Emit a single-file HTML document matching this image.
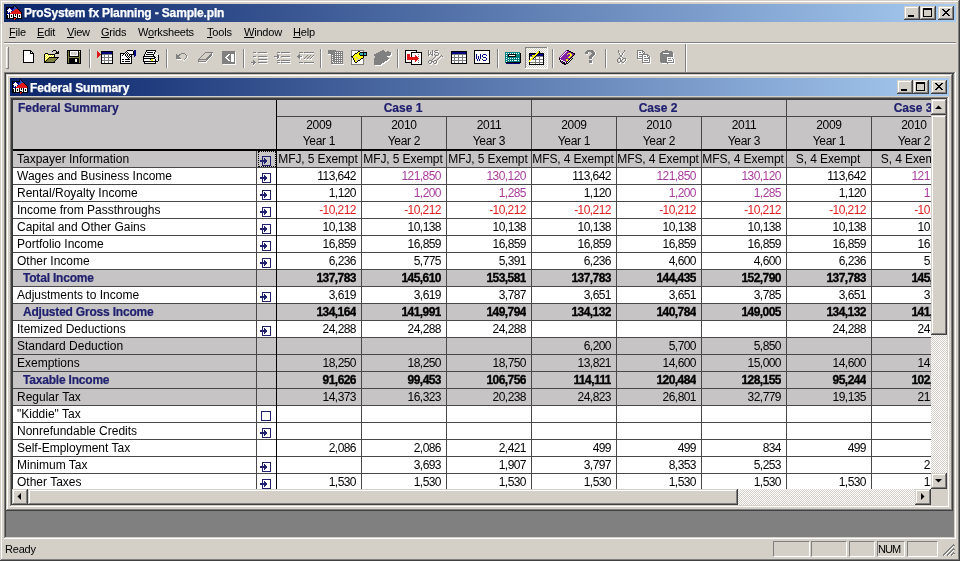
<!DOCTYPE html>
<html><head><meta charset="utf-8"><style>
html,body{margin:0;padding:0;width:960px;height:561px;overflow:hidden;background:#D4D0C8}
body div,body svg{position:absolute}
.t{white-space:nowrap;font-family:"Liberation Sans",sans-serif}
u{text-decoration:underline}
</style></head><body>
<div style="left:0;top:0;width:960px;height:561px;will-change:transform">
<div style="left:0px;top:0px;width:960px;height:561px;background:#D4D0C8;"></div>
<div style="left:1px;top:1px;width:957px;height:1px;background:#FFFFFF;"></div>
<div style="left:1px;top:1px;width:1px;height:558px;background:#FFFFFF;"></div>
<div style="left:958px;top:1px;width:1px;height:559px;background:#808080;"></div>
<div style="left:1px;top:559px;width:958px;height:1px;background:#808080;"></div>
<div style="left:959px;top:0px;width:1px;height:561px;background:#404040;"></div>
<div style="left:0px;top:560px;width:960px;height:1px;background:#404040;"></div>
<div style="left:4px;top:4px;width:952px;height:18px;background:linear-gradient(to right,#0A246A,#A6CAF0);"></div>
<svg style="left:6px;top:5px" width="16" height="15" shape-rendering="crispEdges"><path fill="#000000" d="M8 0h1v1h-1zM7 1h1v1h-1zM9 1h1v1h-1zM0 2h8v1h-8zM10 2h1v1h-1zM0 3h1v1h-1zM11 3h1v1h-1zM0 4h1v1h-1zM12 4h1v1h-1zM0 5h1v1h-1zM13 5h1v1h-1zM0 6h1v1h-1zM14 6h1v1h-1zM0 7h1v1h-1zM15 7h1v1h-1zM0 8h1v1h-1zM15 8h1v1h-1zM0 9h1v1h-1zM3 9h1v1h-1zM7 9h1v1h-1zM9 9h1v1h-1zM11 9h1v1h-1zM15 9h1v1h-1zM0 10h2v1h-2zM3 10h1v1h-1zM5 10h1v1h-1zM7 10h1v1h-1zM9 10h1v1h-1zM11 10h1v1h-1zM13 10h1v1h-1zM15 10h1v1h-1zM0 11h2v1h-2zM3 11h1v1h-1zM5 11h1v1h-1zM7 11h1v1h-1zM11 11h1v1h-1zM13 11h1v1h-1zM15 11h1v1h-1zM0 12h2v1h-2zM3 12h1v1h-1zM7 12h3v1h-3zM11 12h1v1h-1zM15 12h1v1h-1zM0 13h8v1h-8zM10 13h6v1h-6zM9 14h1v1h-1z"/><path fill="#3050C0" d="M8 1h1v1h-1zM8 2h2v1h-2zM8 3h3v1h-3zM7 4h2v1h-2zM7 5h1v1h-1z"/><path fill="#000080" d="M1 3h2v1h-2zM4 3h4v1h-4zM1 4h1v1h-1zM5 4h2v1h-2zM6 5h1v1h-1zM1 6h1v1h-1zM5 6h1v1h-1zM1 7h1v1h-1zM3 7h1v1h-1zM1 8h3v1h-3z"/><path fill="#FFFFFF" d="M3 3h1v1h-1zM2 4h3v1h-3zM1 5h5v1h-5zM2 6h3v1h-3zM2 7h1v1h-1zM4 7h1v1h-1zM1 9h2v1h-2zM4 9h3v1h-3zM8 9h1v1h-1zM10 9h1v1h-1zM12 9h3v1h-3zM2 10h1v1h-1zM4 10h1v1h-1zM6 10h1v1h-1zM8 10h1v1h-1zM10 10h1v1h-1zM12 10h1v1h-1zM14 10h1v1h-1zM2 11h1v1h-1zM4 11h1v1h-1zM6 11h1v1h-1zM8 11h3v1h-3zM12 11h1v1h-1zM14 11h1v1h-1zM2 12h1v1h-1zM4 12h3v1h-3zM10 12h1v1h-1zM12 12h3v1h-3z"/><path fill="#E01818" d="M9 4h3v1h-3zM8 5h5v1h-5zM6 6h8v1h-8zM5 7h10v1h-10zM4 8h11v1h-11zM8 13h2v1h-2zM8 14h1v1h-1z"/></svg>
<div class="t" style="left:24px;top:4px;font-size:12px;font-weight:bold;color:#fff;line-height:18px;letter-spacing:-0.15px;-webkit-text-stroke:0.25px #fff">ProSystem fx Planning - Sample.pln</div>
<div style="left:938px;top:6px;width:16px;height:14px;background:#D4D0C8;"></div>
<div style="left:938px;top:6px;width:15px;height:1px;background:#D4D0C8;"></div>
<div style="left:938px;top:6px;width:1px;height:13px;background:#D4D0C8;"></div>
<div style="left:939px;top:7px;width:13px;height:1px;background:#FFFFFF;"></div>
<div style="left:939px;top:7px;width:1px;height:11px;background:#FFFFFF;"></div>
<div style="left:952px;top:7px;width:1px;height:12px;background:#808080;"></div>
<div style="left:939px;top:18px;width:14px;height:1px;background:#808080;"></div>
<div style="left:953px;top:6px;width:1px;height:14px;background:#404040;"></div>
<div style="left:938px;top:19px;width:16px;height:1px;background:#404040;"></div>
<div style="left:920px;top:6px;width:16px;height:14px;background:#D4D0C8;"></div>
<div style="left:920px;top:6px;width:15px;height:1px;background:#D4D0C8;"></div>
<div style="left:920px;top:6px;width:1px;height:13px;background:#D4D0C8;"></div>
<div style="left:921px;top:7px;width:13px;height:1px;background:#FFFFFF;"></div>
<div style="left:921px;top:7px;width:1px;height:11px;background:#FFFFFF;"></div>
<div style="left:934px;top:7px;width:1px;height:12px;background:#808080;"></div>
<div style="left:921px;top:18px;width:14px;height:1px;background:#808080;"></div>
<div style="left:935px;top:6px;width:1px;height:14px;background:#404040;"></div>
<div style="left:920px;top:19px;width:16px;height:1px;background:#404040;"></div>
<div style="left:904px;top:6px;width:16px;height:14px;background:#D4D0C8;"></div>
<div style="left:904px;top:6px;width:15px;height:1px;background:#D4D0C8;"></div>
<div style="left:904px;top:6px;width:1px;height:13px;background:#D4D0C8;"></div>
<div style="left:905px;top:7px;width:13px;height:1px;background:#FFFFFF;"></div>
<div style="left:905px;top:7px;width:1px;height:11px;background:#FFFFFF;"></div>
<div style="left:918px;top:7px;width:1px;height:12px;background:#808080;"></div>
<div style="left:905px;top:18px;width:14px;height:1px;background:#808080;"></div>
<div style="left:919px;top:6px;width:1px;height:14px;background:#404040;"></div>
<div style="left:904px;top:19px;width:16px;height:1px;background:#404040;"></div>
<div style="left:908px;top:15px;width:6px;height:2px;background:#000;"></div>
<div style="left:923px;top:8px;width:9px;height:9px;background:transparent;border:1px solid #000;border-top-width:2px;box-sizing:border-box"></div>
<svg style="position:absolute;left:938px;top:6px" width="16" height="14"><path d="M4 3 L11 10 M5 3 L12 10 M11 3 L4 10 M12 3 L5 10" stroke="#000" stroke-width="1" shape-rendering="crispEdges"/></svg>
<div class="t" style="left:9px;top:24px;font-size:11px;font-weight:normal;color:#000;line-height:16px;letter-spacing:-0.2px"><u>F</u>ile</div>
<div class="t" style="left:37px;top:24px;font-size:11px;font-weight:normal;color:#000;line-height:16px;letter-spacing:-0.2px"><u>E</u>dit</div>
<div class="t" style="left:67px;top:24px;font-size:11px;font-weight:normal;color:#000;line-height:16px;letter-spacing:-0.2px"><u>V</u>iew</div>
<div class="t" style="left:101px;top:24px;font-size:11px;font-weight:normal;color:#000;line-height:16px;letter-spacing:-0.2px"><u>G</u>rids</div>
<div class="t" style="left:138px;top:24px;font-size:11px;font-weight:normal;color:#000;line-height:16px;letter-spacing:-0.2px">W<u>o</u>rksheets</div>
<div class="t" style="left:207px;top:24px;font-size:11px;font-weight:normal;color:#000;line-height:16px;letter-spacing:-0.2px"><u>T</u>ools</div>
<div class="t" style="left:244px;top:24px;font-size:11px;font-weight:normal;color:#000;line-height:16px;letter-spacing:-0.2px"><u>W</u>indow</div>
<div class="t" style="left:293px;top:24px;font-size:11px;font-weight:normal;color:#000;line-height:16px;letter-spacing:-0.2px"><u>H</u>elp</div>
<div style="left:4px;top:42px;width:952px;height:1px;background:#808080;"></div>
<div style="left:4px;top:43px;width:952px;height:1px;background:#FFFFFF;"></div>
<div style="left:6px;top:47px;width:1px;height:22px;background:#FFFFFF;"></div>
<div style="left:6px;top:47px;width:3px;height:1px;background:#FFFFFF;"></div>
<div style="left:8px;top:47px;width:1px;height:22px;background:#808080;"></div>
<div style="left:6px;top:68px;width:3px;height:1px;background:#808080;"></div>
<div style="left:89px;top:49px;width:1px;height:19px;background:#808080;"></div>
<div style="left:90px;top:49px;width:1px;height:19px;background:#FFFFFF;"></div>
<div style="left:166px;top:49px;width:1px;height:19px;background:#808080;"></div>
<div style="left:167px;top:49px;width:1px;height:19px;background:#FFFFFF;"></div>
<div style="left:243px;top:49px;width:1px;height:19px;background:#808080;"></div>
<div style="left:244px;top:49px;width:1px;height:19px;background:#FFFFFF;"></div>
<div style="left:320px;top:49px;width:1px;height:19px;background:#808080;"></div>
<div style="left:321px;top:49px;width:1px;height:19px;background:#FFFFFF;"></div>
<div style="left:397px;top:49px;width:1px;height:19px;background:#808080;"></div>
<div style="left:398px;top:49px;width:1px;height:19px;background:#FFFFFF;"></div>
<div style="left:497px;top:49px;width:1px;height:19px;background:#808080;"></div>
<div style="left:498px;top:49px;width:1px;height:19px;background:#FFFFFF;"></div>
<div style="left:552px;top:49px;width:1px;height:19px;background:#808080;"></div>
<div style="left:553px;top:49px;width:1px;height:19px;background:#FFFFFF;"></div>
<div style="left:605px;top:49px;width:1px;height:19px;background:#808080;"></div>
<div style="left:606px;top:49px;width:1px;height:19px;background:#FFFFFF;"></div>
<div style="left:685px;top:44px;width:1px;height:28px;background:#808080;"></div>
<div style="left:686px;top:44px;width:1px;height:28px;background:#FFFFFF;"></div>
<div style="left:525px;top:47px;width:23px;height:22px;background:repeating-conic-gradient(#fff 0 25%,#D4D0C8 0 50%) 0 0/2px 2px;"></div>
<div style="left:525px;top:47px;width:23px;height:1px;background:#808080;"></div>
<div style="left:525px;top:47px;width:1px;height:22px;background:#808080;"></div>
<div style="left:525px;top:68px;width:23px;height:1px;background:#FFFFFF;"></div>
<div style="left:547px;top:47px;width:1px;height:22px;background:#FFFFFF;"></div>
<svg style="left:23px;top:50px" width="11" height="13" shape-rendering="crispEdges"><path fill="#000000" d="M0 0h8v1h-8zM0 1h1v1h-1zM7 1h2v1h-2zM0 2h1v1h-1zM7 2h1v1h-1zM9 2h1v1h-1zM0 3h1v1h-1zM7 3h4v1h-4zM0 4h1v1h-1zM10 4h1v1h-1zM0 5h1v1h-1zM10 5h1v1h-1zM0 6h1v1h-1zM10 6h1v1h-1zM0 7h1v1h-1zM10 7h1v1h-1zM0 8h1v1h-1zM10 8h1v1h-1zM0 9h1v1h-1zM10 9h1v1h-1zM0 10h1v1h-1zM10 10h1v1h-1zM0 11h1v1h-1zM10 11h1v1h-1zM0 12h11v1h-11z"/><path fill="#FFFFFF" d="M1 1h6v1h-6zM1 2h6v1h-6zM8 2h1v1h-1zM1 3h6v1h-6zM1 4h9v1h-9zM1 5h9v1h-9zM1 6h9v1h-9zM1 7h9v1h-9zM1 8h9v1h-9zM1 9h9v1h-9zM1 10h9v1h-9zM1 11h9v1h-9z"/></svg>
<svg style="left:44px;top:50px" width="15" height="13" shape-rendering="crispEdges"><path fill="#000000" d="M9 0h3v1h-3zM8 1h1v1h-1zM12 1h1v1h-1zM14 1h1v1h-1zM12 2h3v1h-3zM1 3h3v1h-3zM11 3h4v1h-4zM0 4h1v1h-1zM4 4h7v1h-7zM0 5h1v1h-1zM10 5h1v1h-1zM0 6h1v1h-1zM10 6h1v1h-1zM0 7h1v1h-1zM5 7h10v1h-10zM0 8h1v1h-1zM4 8h1v1h-1zM13 8h1v1h-1zM0 9h1v1h-1zM3 9h1v1h-1zM12 9h1v1h-1zM0 10h1v1h-1zM2 10h1v1h-1zM11 10h1v1h-1zM0 11h2v1h-2zM10 11h1v1h-1zM0 12h11v1h-11z"/><path fill="#FFFF00" d="M1 4h1v1h-1zM3 4h1v1h-1zM2 5h1v1h-1zM4 5h1v1h-1zM6 5h1v1h-1zM8 5h1v1h-1zM1 6h1v1h-1zM3 6h1v1h-1zM5 6h1v1h-1zM7 6h1v1h-1zM9 6h1v1h-1zM2 7h1v1h-1zM4 7h1v1h-1zM1 8h1v1h-1zM3 8h1v1h-1zM2 9h1v1h-1zM1 10h1v1h-1z"/><path fill="#FFFFFF" d="M2 4h1v1h-1zM1 5h1v1h-1zM3 5h1v1h-1zM5 5h1v1h-1zM7 5h1v1h-1zM9 5h1v1h-1zM2 6h1v1h-1zM4 6h1v1h-1zM6 6h1v1h-1zM8 6h1v1h-1zM1 7h1v1h-1zM3 7h1v1h-1zM2 8h1v1h-1zM1 9h1v1h-1z"/><path fill="#808040" d="M5 8h8v1h-8zM4 9h8v1h-8zM3 10h8v1h-8zM2 11h8v1h-8z"/></svg>
<svg style="left:67px;top:50px" width="14" height="14" shape-rendering="crispEdges"><path fill="#000000" d="M0 0h14v1h-14zM0 1h1v1h-1zM2 1h1v1h-1zM11 1h1v1h-1zM13 1h1v1h-1zM0 2h1v1h-1zM2 2h1v1h-1zM11 2h1v1h-1zM13 2h1v1h-1zM0 3h1v1h-1zM2 3h1v1h-1zM11 3h1v1h-1zM13 3h1v1h-1zM0 4h1v1h-1zM2 4h1v1h-1zM11 4h1v1h-1zM13 4h1v1h-1zM0 5h1v1h-1zM2 5h1v1h-1zM11 5h1v1h-1zM13 5h1v1h-1zM0 6h1v1h-1zM2 6h10v1h-10zM13 6h1v1h-1zM0 7h1v1h-1zM13 7h1v1h-1zM0 8h1v1h-1zM2 8h10v1h-10zM13 8h1v1h-1zM0 9h1v1h-1zM2 9h6v1h-6zM10 9h2v1h-2zM13 9h1v1h-1zM0 10h1v1h-1zM2 10h6v1h-6zM10 10h2v1h-2zM13 10h1v1h-1zM0 11h1v1h-1zM2 11h6v1h-6zM10 11h2v1h-2zM13 11h1v1h-1zM0 12h1v1h-1zM2 12h10v1h-10zM13 12h1v1h-1zM0 13h14v1h-14z"/><path fill="#808040" d="M1 1h1v1h-1zM1 2h1v1h-1zM12 2h1v1h-1zM1 3h1v1h-1zM12 3h1v1h-1zM1 4h1v1h-1zM12 4h1v1h-1zM1 5h1v1h-1zM12 5h1v1h-1zM1 6h1v1h-1zM12 6h1v1h-1zM1 7h12v1h-12zM1 8h1v1h-1zM12 8h1v1h-1zM1 9h1v1h-1zM12 9h1v1h-1zM1 10h1v1h-1zM12 10h1v1h-1zM1 11h1v1h-1zM12 11h1v1h-1zM1 12h1v1h-1zM12 12h1v1h-1z"/><path fill="#FFFFFF" d="M3 1h8v1h-8zM12 1h1v1h-1zM3 2h1v1h-1zM10 2h1v1h-1zM3 3h1v1h-1zM10 3h1v1h-1zM3 4h1v1h-1zM10 4h1v1h-1zM3 5h8v1h-8zM8 9h2v1h-2zM8 10h2v1h-2zM8 11h2v1h-2z"/><path fill="#D4D0C8" d="M4 2h6v1h-6zM4 3h6v1h-6zM4 4h6v1h-6z"/></svg>
<svg style="left:97px;top:51px" width="16" height="13" shape-rendering="crispEdges"><path fill="#E01818" d="M0 0h1v1h-1zM0 1h2v1h-2zM0 2h3v1h-3zM0 3h4v1h-4zM0 4h3v1h-3zM0 5h2v1h-2zM0 6h1v1h-1z"/><path fill="#000000" d="M4 0h12v1h-12zM4 1h1v1h-1zM15 1h1v1h-1zM4 2h1v1h-1zM15 2h1v1h-1zM4 3h1v1h-1zM15 3h1v1h-1zM4 4h1v1h-1zM15 4h1v1h-1zM4 5h1v1h-1zM15 5h1v1h-1zM4 6h1v1h-1zM15 6h1v1h-1zM4 7h1v1h-1zM15 7h1v1h-1zM4 8h1v1h-1zM15 8h1v1h-1zM4 9h1v1h-1zM15 9h1v1h-1zM4 10h1v1h-1zM15 10h1v1h-1zM4 11h1v1h-1zM15 11h1v1h-1zM4 12h12v1h-12z"/><path fill="#000080" d="M5 1h10v1h-10zM5 2h10v1h-10z"/><path fill="#808080" d="M5 3h10v1h-10zM7 4h1v1h-1zM11 4h1v1h-1zM7 5h1v1h-1zM11 5h1v1h-1zM5 6h10v1h-10zM7 7h1v1h-1zM11 7h1v1h-1zM7 8h1v1h-1zM11 8h1v1h-1zM5 9h10v1h-10zM7 10h1v1h-1zM11 10h1v1h-1zM7 11h1v1h-1zM11 11h1v1h-1z"/><path fill="#FFFFFF" d="M5 4h2v1h-2zM8 4h3v1h-3zM12 4h3v1h-3zM5 5h2v1h-2zM8 5h3v1h-3zM12 5h3v1h-3zM5 7h2v1h-2zM8 7h3v1h-3zM12 7h3v1h-3zM5 8h2v1h-2zM8 8h3v1h-3zM12 8h3v1h-3zM5 10h2v1h-2zM8 10h3v1h-3zM12 10h3v1h-3zM5 11h2v1h-2zM8 11h3v1h-3zM12 11h3v1h-3z"/></svg>
<svg style="left:120px;top:50px" width="16" height="14" shape-rendering="crispEdges"><path fill="#000000" d="M7 0h6v1h-6zM6 1h1v1h-1zM13 1h1v1h-1zM5 2h1v1h-1zM7 2h1v1h-1zM13 2h1v1h-1zM0 3h5v1h-5zM6 3h1v1h-1zM8 3h1v1h-1zM13 3h1v1h-1zM0 4h1v1h-1zM3 4h1v1h-1zM5 4h1v1h-1zM7 4h1v1h-1zM9 4h5v1h-5zM0 5h1v1h-1zM2 5h1v1h-1zM5 5h1v1h-1zM7 5h1v1h-1zM9 5h1v1h-1zM11 5h1v1h-1zM0 6h1v1h-1zM6 6h1v1h-1zM8 6h1v1h-1zM10 6h2v1h-2zM0 7h1v1h-1zM7 7h1v1h-1zM9 7h1v1h-1zM11 7h1v1h-1zM0 8h1v1h-1zM8 8h1v1h-1zM11 8h1v1h-1zM0 9h1v1h-1zM2 9h2v1h-2zM5 9h5v1h-5zM11 9h1v1h-1zM0 10h1v1h-1zM11 10h1v1h-1zM0 11h1v1h-1zM2 11h2v1h-2zM5 11h5v1h-5zM11 11h1v1h-1zM0 12h1v1h-1zM11 12h1v1h-1zM0 13h12v1h-12z"/><path fill="#000080" d="M14 0h2v1h-2zM14 1h2v1h-2zM14 2h2v1h-2zM14 3h2v1h-2zM14 4h2v1h-2zM14 5h2v1h-2zM14 6h1v1h-1z"/><path fill="#FFFFFF" d="M7 1h6v1h-6zM6 2h1v1h-1zM8 2h5v1h-5zM5 3h1v1h-1zM7 3h1v1h-1zM9 3h4v1h-4zM1 4h2v1h-2zM4 4h1v1h-1zM6 4h1v1h-1zM8 4h1v1h-1zM1 5h1v1h-1zM3 5h2v1h-2zM6 5h1v1h-1zM8 5h1v1h-1zM10 5h1v1h-1zM1 6h5v1h-5zM7 6h1v1h-1zM9 6h1v1h-1zM1 7h6v1h-6zM8 7h1v1h-1zM10 7h1v1h-1zM1 8h7v1h-7zM9 8h2v1h-2zM1 9h1v1h-1zM4 9h1v1h-1zM10 9h1v1h-1zM1 10h10v1h-10zM1 11h1v1h-1zM4 11h1v1h-1zM10 11h1v1h-1zM1 12h10v1h-10z"/></svg>
<svg style="left:143px;top:50px" width="16" height="14" shape-rendering="crispEdges"><path fill="#000000" d="M3 0h10v1h-10zM3 1h1v1h-1zM12 1h1v1h-1zM2 2h1v1h-1zM4 2h6v1h-6zM11 2h1v1h-1zM2 3h1v1h-1zM11 3h1v1h-1zM1 4h1v1h-1zM3 4h8v1h-8zM1 5h1v1h-1zM10 5h1v1h-1zM15 5h1v1h-1zM0 6h12v1h-12zM15 6h1v1h-1zM0 7h1v1h-1zM11 7h2v1h-2zM15 7h1v1h-1zM0 8h12v1h-12zM15 8h1v1h-1zM0 9h1v1h-1zM12 9h1v1h-1zM15 9h1v1h-1zM0 10h1v1h-1zM12 10h1v1h-1zM15 10h1v1h-1zM0 11h15v1h-15zM1 12h1v1h-1zM12 12h1v1h-1zM1 13h12v1h-12z"/><path fill="#FFFFFF" d="M4 1h8v1h-8zM3 2h1v1h-1zM10 2h1v1h-1zM3 3h8v1h-8zM13 3h1v1h-1zM2 4h1v1h-1zM12 4h1v1h-1zM14 4h1v1h-1zM2 5h8v1h-8zM11 5h1v1h-1zM13 5h1v1h-1zM12 6h1v1h-1zM14 6h1v1h-1zM1 7h10v1h-10zM13 7h1v1h-1zM12 8h1v1h-1zM14 8h1v1h-1zM1 9h6v1h-6zM10 9h2v1h-2zM13 9h1v1h-1zM1 10h7v1h-7zM10 10h2v1h-2zM14 10h1v1h-1zM2 12h10v1h-10zM13 12h1v1h-1z"/><path fill="#000080" d="M7 9h1v1h-1z"/><path fill="#FFFF00" d="M8 9h2v1h-2zM8 10h2v1h-2z"/></svg>
<svg style="left:175px;top:53px" width="13" height="8" shape-rendering="crispEdges"><path fill="#808080" d="M6 0h4v1h-4zM1 1h1v1h-1zM4 1h2v1h-2zM10 1h1v1h-1zM1 2h4v1h-4zM11 2h1v1h-1zM1 3h3v1h-3zM11 3h1v1h-1zM1 4h4v1h-4zM11 4h1v1h-1zM1 5h5v1h-5zM10 5h1v1h-1zM9 6h1v1h-1z"/><path fill="#FFFFFF" d="M12 3h1v1h-1zM12 4h1v1h-1zM11 5h1v1h-1zM2 6h5v1h-5zM10 6h1v1h-1zM8 7h2v1h-2z"/></svg>
<svg style="left:198px;top:52px" width="15" height="11" shape-rendering="crispEdges"><path fill="#808080" d="M7 0h8v1h-8zM6 1h1v1h-1zM13 1h1v1h-1zM5 2h1v1h-1zM12 2h2v1h-2zM4 3h1v1h-1zM11 3h3v1h-3zM3 4h1v1h-1zM10 4h3v1h-3zM2 5h1v1h-1zM9 5h3v1h-3zM1 6h1v1h-1zM8 6h3v1h-3zM0 7h10v1h-10zM0 8h1v1h-1zM8 8h1v1h-1zM0 9h8v1h-8z"/><path fill="#FFFFFF" d="M14 1h1v1h-1zM14 2h1v1h-1zM14 3h1v1h-1zM13 4h1v1h-1zM12 5h1v1h-1zM11 6h1v1h-1zM10 7h1v1h-1zM9 8h1v1h-1zM8 9h1v1h-1zM1 10h8v1h-8z"/></svg>
<svg style="left:222px;top:51px" width="14" height="14" shape-rendering="crispEdges"><path fill="#808080" d="M0 0h13v1h-13zM0 1h13v1h-13zM0 2h13v1h-13zM0 3h6v1h-6zM8 3h1v1h-1zM12 3h1v1h-1zM0 4h5v1h-5zM7 4h2v1h-2zM12 4h1v1h-1zM0 5h4v1h-4zM6 5h3v1h-3zM12 5h1v1h-1zM0 6h3v1h-3zM5 6h4v1h-4zM12 6h1v1h-1zM0 7h4v1h-4zM6 7h3v1h-3zM12 7h1v1h-1zM0 8h5v1h-5zM7 8h2v1h-2zM12 8h1v1h-1zM0 9h6v1h-6zM8 9h1v1h-1zM12 9h1v1h-1zM0 10h9v1h-9zM12 10h1v1h-1zM0 11h13v1h-13zM0 12h13v1h-13z"/><path fill="#FFFFFF" d="M13 1h1v1h-1zM13 2h1v1h-1zM6 3h2v1h-2zM9 3h3v1h-3zM13 3h1v1h-1zM5 4h2v1h-2zM9 4h3v1h-3zM13 4h1v1h-1zM4 5h2v1h-2zM9 5h3v1h-3zM13 5h1v1h-1zM3 6h2v1h-2zM9 6h3v1h-3zM13 6h1v1h-1zM4 7h2v1h-2zM9 7h3v1h-3zM13 7h1v1h-1zM5 8h2v1h-2zM9 8h3v1h-3zM13 8h1v1h-1zM6 9h2v1h-2zM9 9h3v1h-3zM13 9h1v1h-1zM9 10h3v1h-3zM13 10h1v1h-1zM13 11h1v1h-1zM13 12h1v1h-1zM1 13h13v1h-13z"/></svg>
<svg style="left:251px;top:52px" width="17" height="14" shape-rendering="crispEdges"><path fill="#808080" d="M2 0h3v1h-3zM7 0h9v1h-9zM2 4h3v1h-3zM7 4h9v1h-9zM7 7h9v1h-9zM2 8h1v1h-1zM2 9h2v1h-2zM0 10h5v1h-5zM7 10h9v1h-9zM2 11h2v1h-2zM2 12h1v1h-1z"/><path fill="#FFFFFF" d="M3 1h3v1h-3zM8 1h9v1h-9zM3 5h3v1h-3zM8 5h9v1h-9zM8 8h9v1h-9zM1 11h1v1h-1zM4 11h1v1h-1zM8 11h9v1h-9zM3 12h1v1h-1zM2 13h1v1h-1z"/></svg>
<svg style="left:274px;top:52px" width="17" height="12" shape-rendering="crispEdges"><path fill="#808080" d="M3 0h3v1h-3zM7 0h9v1h-9zM3 2h1v1h-1zM3 3h2v1h-2zM0 4h5v1h-5zM7 4h9v1h-9zM3 5h2v1h-2zM3 6h1v1h-1zM3 8h3v1h-3zM7 8h9v1h-9zM3 10h3v1h-3zM7 10h9v1h-9z"/><path fill="#FFFFFF" d="M4 1h3v1h-3zM8 1h9v1h-9zM5 4h1v1h-1zM1 5h2v1h-2zM5 5h1v1h-1zM8 5h9v1h-9zM4 6h1v1h-1zM3 7h1v1h-1zM4 9h3v1h-3zM8 9h9v1h-9zM4 11h3v1h-3zM8 11h9v1h-9z"/></svg>
<svg style="left:297px;top:52px" width="17" height="12" shape-rendering="crispEdges"><path fill="#808080" d="M2 0h4v1h-4zM7 0h10v1h-10zM2 2h1v1h-1zM1 3h2v1h-2zM10 3h1v1h-1zM13 3h1v1h-1zM16 3h1v1h-1zM0 4h5v1h-5zM9 4h1v1h-1zM12 4h1v1h-1zM15 4h1v1h-1zM1 5h2v1h-2zM8 5h1v1h-1zM11 5h1v1h-1zM14 5h1v1h-1zM2 6h1v1h-1zM7 6h1v1h-1zM10 6h1v1h-1zM13 6h1v1h-1zM2 10h4v1h-4zM7 10h10v1h-10z"/><path fill="#FFFFFF" d="M3 1h4v1h-4zM8 1h9v1h-9zM5 4h1v1h-1zM16 4h1v1h-1zM3 5h3v1h-3zM15 5h1v1h-1zM3 6h1v1h-1zM14 6h1v1h-1zM3 7h1v1h-1zM7 7h2v1h-2zM10 7h2v1h-2zM13 7h2v1h-2zM3 11h4v1h-4zM8 11h9v1h-9z"/></svg>
<svg style="left:328px;top:50px" width="16" height="15" shape-rendering="crispEdges"><path fill="#808080" d="M0 0h8v1h-8zM0 1h15v1h-15zM0 2h7v1h-7zM8 2h1v1h-1zM10 2h1v1h-1zM12 2h1v1h-1zM14 2h1v1h-1zM0 3h15v1h-15zM3 4h4v1h-4zM8 4h1v1h-1zM10 4h1v1h-1zM12 4h1v1h-1zM14 4h1v1h-1zM3 5h1v1h-1zM5 5h10v1h-10zM3 6h4v1h-4zM8 6h1v1h-1zM10 6h1v1h-1zM12 6h1v1h-1zM14 6h1v1h-1zM3 7h1v1h-1zM5 7h10v1h-10zM3 8h4v1h-4zM8 8h1v1h-1zM10 8h1v1h-1zM12 8h1v1h-1zM14 8h1v1h-1zM3 9h1v1h-1zM5 9h10v1h-10zM3 10h4v1h-4zM8 10h1v1h-1zM10 10h1v1h-1zM12 10h1v1h-1zM14 10h1v1h-1zM3 11h1v1h-1zM5 11h10v1h-10zM3 12h2v1h-2zM6 12h1v1h-1zM8 12h1v1h-1zM10 12h1v1h-1zM12 12h1v1h-1zM14 12h1v1h-1zM3 13h12v1h-12z"/><path fill="#FFFFFF" d="M7 2h1v1h-1zM9 2h1v1h-1zM11 2h1v1h-1zM13 2h1v1h-1zM0 4h3v1h-3zM7 4h1v1h-1zM9 4h1v1h-1zM11 4h1v1h-1zM13 4h1v1h-1zM4 5h1v1h-1zM7 6h1v1h-1zM9 6h1v1h-1zM11 6h1v1h-1zM13 6h1v1h-1zM4 7h1v1h-1zM7 8h1v1h-1zM9 8h1v1h-1zM11 8h1v1h-1zM13 8h1v1h-1zM4 9h1v1h-1zM7 10h1v1h-1zM9 10h1v1h-1zM11 10h1v1h-1zM13 10h1v1h-1zM4 11h1v1h-1zM5 12h1v1h-1zM7 12h1v1h-1zM9 12h1v1h-1zM11 12h1v1h-1zM13 12h1v1h-1zM4 14h12v1h-12z"/></svg>
<svg style="left:351px;top:50px" width="17" height="15" shape-rendering="crispEdges"><path fill="#808080" d="M0 0h13v1h-13zM0 1h1v1h-1zM12 1h1v1h-1zM0 2h1v1h-1zM0 3h1v1h-1zM0 4h1v1h-1zM0 5h1v1h-1zM0 7h1v1h-1zM0 8h1v1h-1zM12 8h1v1h-1zM0 9h1v1h-1zM12 9h1v1h-1zM0 10h1v1h-1zM12 10h1v1h-1zM0 11h1v1h-1zM12 11h1v1h-1zM0 12h1v1h-1zM12 12h1v1h-1zM0 13h1v1h-1zM12 13h1v1h-1zM0 14h13v1h-13z"/><path fill="#FFFFFF" d="M1 1h6v1h-6zM9 1h3v1h-3zM1 2h5v1h-5zM1 3h3v1h-3zM1 4h2v1h-2zM1 5h1v1h-1zM1 8h1v1h-1zM1 9h1v1h-1zM10 9h2v1h-2zM1 10h2v1h-2zM9 10h3v1h-3zM1 11h2v1h-2zM7 11h5v1h-5zM1 12h3v1h-3zM6 12h6v1h-6zM1 13h11v1h-11z"/><path fill="#000000" d="M7 1h2v1h-2zM6 2h1v1h-1zM9 2h7v1h-7zM4 3h2v1h-2zM8 3h1v1h-1zM12 3h1v1h-1zM15 3h1v1h-1zM3 4h1v1h-1zM8 4h1v1h-1zM12 4h1v1h-1zM15 4h1v1h-1zM2 5h1v1h-1zM9 5h7v1h-7zM0 6h2v1h-2zM12 6h1v1h-1zM1 7h1v1h-1zM12 7h1v1h-1zM2 8h1v1h-1zM10 8h2v1h-2zM2 9h1v1h-1zM9 9h1v1h-1zM3 10h1v1h-1zM7 10h2v1h-2zM3 11h1v1h-1zM6 11h1v1h-1zM4 12h2v1h-2z"/><path fill="#FFFF00" d="M7 2h2v1h-2zM6 3h2v1h-2zM4 4h4v1h-4zM3 5h6v1h-6zM2 6h10v1h-10zM2 7h2v1h-2zM6 7h6v1h-6zM3 8h3v1h-3zM7 8h3v1h-3zM3 9h4v1h-4zM4 10h1v1h-1zM4 11h2v1h-2z"/><path fill="#30B0C0" d="M9 3h3v1h-3zM13 3h2v1h-2zM9 4h3v1h-3zM13 4h2v1h-2z"/><path fill="#C0C0C0" d="M4 7h2v1h-2zM6 8h1v1h-1zM7 9h2v1h-2zM5 10h2v1h-2z"/></svg>
<svg style="left:373px;top:50px" width="19" height="16" shape-rendering="crispEdges"><path fill="#808080" d="M9 0h2v1h-2zM7 1h5v1h-5zM14 1h2v1h-2zM5 2h13v1h-13zM3 3h15v1h-15zM1 4h17v1h-17zM1 5h16v1h-16zM2 6h12v1h-12zM2 7h13v1h-13zM1 8h15v1h-15zM1 9h14v1h-14zM1 10h13v1h-13zM1 11h11v1h-11zM1 12h10v1h-10zM1 13h8v1h-8zM1 14h7v1h-7z"/><path fill="#FFFFFF" d="M18 3h1v1h-1zM18 4h1v1h-1zM17 5h2v1h-2zM14 6h4v1h-4zM15 9h2v1h-2zM14 10h2v1h-2zM12 11h3v1h-3zM11 12h2v1h-2zM9 13h3v1h-3zM8 14h2v1h-2zM2 15h7v1h-7z"/></svg>
<svg style="left:405px;top:50px" width="17" height="15" shape-rendering="crispEdges"><path fill="#000000" d="M0 0h12v1h-12zM0 1h1v1h-1zM11 1h1v1h-1zM0 2h1v1h-1zM6 2h11v1h-11zM0 3h1v1h-1zM6 3h1v1h-1zM16 3h1v1h-1zM0 4h1v1h-1zM6 4h1v1h-1zM16 4h1v1h-1zM0 5h1v1h-1zM6 5h1v1h-1zM16 5h1v1h-1zM0 6h1v1h-1zM6 6h1v1h-1zM16 6h1v1h-1zM0 7h1v1h-1zM16 7h1v1h-1zM0 8h1v1h-1zM16 8h1v1h-1zM0 9h1v1h-1zM16 9h1v1h-1zM0 10h1v1h-1zM6 10h1v1h-1zM16 10h1v1h-1zM0 11h1v1h-1zM6 11h1v1h-1zM16 11h1v1h-1zM0 12h7v1h-7zM16 12h1v1h-1zM6 13h1v1h-1zM16 13h1v1h-1zM6 14h11v1h-11z"/><path fill="#FFFFFF" d="M1 1h10v1h-10zM1 2h5v1h-5zM1 3h5v1h-5zM7 3h9v1h-9zM1 4h1v1h-1zM5 4h1v1h-1zM7 4h6v1h-6zM14 4h2v1h-2zM1 5h1v1h-1zM5 5h1v1h-1zM7 5h3v1h-3zM11 5h5v1h-5zM1 6h1v1h-1zM5 6h1v1h-1zM7 6h3v1h-3zM12 6h1v1h-1zM14 6h2v1h-2zM1 7h1v1h-1zM13 7h3v1h-3zM1 8h1v1h-1zM14 8h2v1h-2zM1 9h1v1h-1zM13 9h3v1h-3zM1 10h5v1h-5zM7 10h3v1h-3zM12 10h1v1h-1zM14 10h2v1h-2zM1 11h5v1h-5zM7 11h3v1h-3zM11 11h5v1h-5zM7 12h6v1h-6zM14 12h2v1h-2zM7 13h9v1h-9z"/><path fill="#E01818" d="M2 4h3v1h-3zM2 5h3v1h-3zM10 5h1v1h-1zM2 6h3v1h-3zM10 6h2v1h-2zM2 7h11v1h-11zM2 8h12v1h-12zM2 9h11v1h-11zM10 10h2v1h-2zM10 11h1v1h-1z"/><path fill="#808080" d="M13 4h1v1h-1zM13 6h1v1h-1zM13 10h1v1h-1zM13 12h1v1h-1z"/></svg>
<svg style="left:428px;top:50px" width="17" height="16" shape-rendering="crispEdges"><path fill="#808080" d="M0 0h1v1h-1zM4 0h1v1h-1zM7 0h3v1h-3zM0 1h1v1h-1zM4 1h1v1h-1zM6 1h1v1h-1zM0 2h1v1h-1zM2 2h1v1h-1zM4 2h1v1h-1zM7 2h3v1h-3zM0 3h1v1h-1zM2 3h1v1h-1zM4 3h1v1h-1zM10 3h1v1h-1zM0 4h2v1h-2zM3 4h2v1h-2zM6 4h1v1h-1zM10 4h1v1h-1zM0 5h1v1h-1zM4 5h1v1h-1zM7 5h3v1h-3zM13 5h1v1h-1zM7 6h1v1h-1zM12 6h1v1h-1zM14 6h1v1h-1zM6 7h1v1h-1zM11 7h1v1h-1zM5 8h1v1h-1zM10 8h1v1h-1zM4 9h1v1h-1zM9 9h1v1h-1zM1 10h3v1h-3zM6 10h3v1h-3zM0 11h1v1h-1zM3 11h3v1h-3zM8 11h1v1h-1zM0 12h1v1h-1zM3 12h1v1h-1zM5 12h1v1h-1zM8 12h1v1h-1zM1 13h2v1h-2zM6 13h2v1h-2z"/><path fill="#FFFFFF" d="M1 1h1v1h-1zM5 1h1v1h-1zM8 1h3v1h-3zM1 2h1v1h-1zM5 2h1v1h-1zM1 3h1v1h-1zM3 3h1v1h-1zM5 3h1v1h-1zM8 3h2v1h-2zM5 4h1v1h-1zM11 4h1v1h-1zM1 5h2v1h-2zM5 5h1v1h-1zM11 5h1v1h-1zM1 6h1v1h-1zM5 6h1v1h-1zM8 6h3v1h-3zM8 7h1v1h-1zM13 7h1v1h-1zM15 7h1v1h-1zM7 8h1v1h-1zM12 8h1v1h-1zM6 9h1v1h-1zM11 9h1v1h-1zM5 10h1v1h-1zM10 10h1v1h-1zM2 11h1v1h-1zM7 11h1v1h-1zM9 11h1v1h-1zM1 12h1v1h-1zM4 12h1v1h-1zM6 12h1v1h-1zM9 12h1v1h-1zM4 13h1v1h-1zM9 13h1v1h-1zM2 14h2v1h-2zM7 14h2v1h-2z"/></svg>
<svg style="left:451px;top:51px" width="16" height="13" shape-rendering="crispEdges"><path fill="#000000" d="M0 0h16v1h-16zM0 1h1v1h-1zM15 1h1v1h-1zM0 2h1v1h-1zM15 2h1v1h-1zM0 3h1v1h-1zM15 3h1v1h-1zM0 4h1v1h-1zM15 4h1v1h-1zM0 5h1v1h-1zM15 5h1v1h-1zM0 6h1v1h-1zM15 6h1v1h-1zM0 7h1v1h-1zM15 7h1v1h-1zM0 8h1v1h-1zM15 8h1v1h-1zM0 9h1v1h-1zM15 9h1v1h-1zM0 10h1v1h-1zM15 10h1v1h-1zM0 11h1v1h-1zM15 11h1v1h-1zM0 12h16v1h-16z"/><path fill="#000080" d="M1 1h14v1h-14zM1 2h14v1h-14z"/><path fill="#808080" d="M1 3h14v1h-14zM3 4h1v1h-1zM7 4h1v1h-1zM11 4h1v1h-1zM3 5h1v1h-1zM7 5h1v1h-1zM11 5h1v1h-1zM1 6h14v1h-14zM3 7h1v1h-1zM7 7h1v1h-1zM11 7h1v1h-1zM3 8h1v1h-1zM7 8h1v1h-1zM11 8h1v1h-1zM1 9h14v1h-14zM3 10h1v1h-1zM7 10h1v1h-1zM11 10h1v1h-1zM3 11h1v1h-1zM7 11h1v1h-1zM11 11h1v1h-1z"/><path fill="#FFFFFF" d="M1 4h2v1h-2zM4 4h3v1h-3zM8 4h3v1h-3zM12 4h3v1h-3zM1 5h2v1h-2zM4 5h3v1h-3zM8 5h3v1h-3zM12 5h3v1h-3zM1 7h2v1h-2zM4 7h3v1h-3zM8 7h3v1h-3zM12 7h3v1h-3zM1 8h2v1h-2zM4 8h3v1h-3zM8 8h3v1h-3zM12 8h3v1h-3zM1 10h2v1h-2zM4 10h3v1h-3zM8 10h3v1h-3zM12 10h3v1h-3zM1 11h2v1h-2zM4 11h3v1h-3zM8 11h3v1h-3zM12 11h3v1h-3z"/></svg>
<svg style="left:474px;top:50px" width="16" height="14" shape-rendering="crispEdges"><path fill="#000000" d="M0 0h16v1h-16zM0 1h1v1h-1zM15 1h1v1h-1zM0 2h1v1h-1zM15 2h1v1h-1zM0 3h1v1h-1zM15 3h1v1h-1zM0 4h1v1h-1zM15 4h1v1h-1zM0 5h1v1h-1zM15 5h1v1h-1zM0 6h1v1h-1zM15 6h1v1h-1zM0 7h1v1h-1zM15 7h1v1h-1zM0 8h1v1h-1zM15 8h1v1h-1zM0 9h1v1h-1zM15 9h1v1h-1zM0 10h1v1h-1zM15 10h1v1h-1zM0 11h1v1h-1zM15 11h1v1h-1zM0 12h1v1h-1zM15 12h1v1h-1zM0 13h16v1h-16z"/><path fill="#FFFFFF" d="M1 1h14v1h-14zM1 2h14v1h-14zM1 3h14v1h-14zM1 4h1v1h-1zM3 4h3v1h-3zM7 4h2v1h-2zM12 4h3v1h-3zM1 5h1v1h-1zM3 5h3v1h-3zM7 5h1v1h-1zM9 5h3v1h-3zM13 5h2v1h-2zM1 6h1v1h-1zM3 6h1v1h-1zM5 6h1v1h-1zM7 6h1v1h-1zM9 6h6v1h-6zM1 7h1v1h-1zM3 7h1v1h-1zM5 7h1v1h-1zM7 7h2v1h-2zM12 7h3v1h-3zM1 8h1v1h-1zM3 8h1v1h-1zM5 8h1v1h-1zM7 8h5v1h-5zM13 8h2v1h-2zM1 9h2v1h-2zM4 9h1v1h-1zM6 9h2v1h-2zM9 9h3v1h-3zM13 9h2v1h-2zM1 10h2v1h-2zM4 10h1v1h-1zM6 10h3v1h-3zM12 10h3v1h-3zM1 11h14v1h-14zM1 12h14v1h-14z"/><path fill="#000080" d="M2 4h1v1h-1zM6 4h1v1h-1zM9 4h3v1h-3zM2 5h1v1h-1zM6 5h1v1h-1zM8 5h1v1h-1zM12 5h1v1h-1zM2 6h1v1h-1zM4 6h1v1h-1zM6 6h1v1h-1zM8 6h1v1h-1zM2 7h1v1h-1zM4 7h1v1h-1zM6 7h1v1h-1zM9 7h3v1h-3zM2 8h1v1h-1zM4 8h1v1h-1zM6 8h1v1h-1zM12 8h1v1h-1zM3 9h1v1h-1zM5 9h1v1h-1zM8 9h1v1h-1zM12 9h1v1h-1zM3 10h1v1h-1zM5 10h1v1h-1zM9 10h3v1h-3z"/></svg>
<svg style="left:505px;top:52px" width="16" height="12" shape-rendering="crispEdges"><path fill="#008080" d="M0 0h15v1h-15zM0 1h1v1h-1zM2 1h1v1h-1zM4 1h1v1h-1zM6 1h1v1h-1zM8 1h1v1h-1zM10 1h1v1h-1zM12 1h1v1h-1zM14 1h1v1h-1zM0 2h3v1h-3zM11 2h4v1h-4zM0 3h1v1h-1zM2 3h1v1h-1zM11 3h4v1h-4zM0 4h3v1h-3zM11 4h4v1h-4zM0 5h1v1h-1zM2 5h13v1h-13zM0 6h3v1h-3zM4 6h1v1h-1zM6 6h1v1h-1zM8 6h1v1h-1zM10 6h1v1h-1zM12 6h1v1h-1zM14 6h1v1h-1zM0 7h1v1h-1zM2 7h13v1h-13zM0 8h3v1h-3zM4 8h1v1h-1zM6 8h1v1h-1zM8 8h1v1h-1zM12 8h1v1h-1zM14 8h1v1h-1zM0 9h1v1h-1zM2 9h13v1h-13zM0 10h1v1h-1z"/><path fill="#FFFFFF" d="M1 1h1v1h-1zM3 1h1v1h-1zM5 1h1v1h-1zM7 1h1v1h-1zM9 1h1v1h-1zM11 1h1v1h-1zM13 1h1v1h-1zM1 3h1v1h-1zM4 3h6v1h-6zM1 5h1v1h-1zM3 6h1v1h-1zM5 6h1v1h-1zM7 6h1v1h-1zM9 6h1v1h-1zM11 6h1v1h-1zM13 6h1v1h-1zM1 7h1v1h-1zM3 8h1v1h-1zM5 8h1v1h-1zM7 8h1v1h-1zM9 8h3v1h-3zM13 8h1v1h-1zM1 9h1v1h-1z"/><path fill="#000000" d="M15 1h1v1h-1zM3 2h8v1h-8zM15 2h1v1h-1zM3 3h1v1h-1zM10 3h1v1h-1zM15 3h1v1h-1zM3 4h8v1h-8zM15 4h1v1h-1zM15 5h1v1h-1zM15 6h1v1h-1zM15 7h1v1h-1zM15 8h1v1h-1zM15 9h1v1h-1zM1 10h15v1h-15z"/><path fill="#000080" d="M1 11h14v1h-14z"/></svg>
<svg style="left:528px;top:50px" width="17" height="16" shape-rendering="crispEdges"><path fill="#FFFF00" d="M10 1h1v1h-1zM9 2h2v1h-2zM8 3h2v1h-2zM7 4h2v1h-2zM4 5h4v1h-4zM5 6h2v1h-2zM4 7h2v1h-2zM3 8h2v1h-2zM2 9h2v1h-2zM1 10h2v1h-2zM1 11h1v1h-1z"/><path fill="#000000" d="M11 1h1v1h-1zM11 2h1v1h-1zM1 3h7v1h-7zM10 3h6v1h-6zM1 4h1v1h-1zM9 4h1v1h-1zM15 4h1v1h-1zM1 5h1v1h-1zM3 5h1v1h-1zM8 5h1v1h-1zM15 5h1v1h-1zM1 6h1v1h-1zM7 6h1v1h-1zM15 6h1v1h-1zM1 7h1v1h-1zM6 7h1v1h-1zM15 7h1v1h-1zM1 8h1v1h-1zM5 8h1v1h-1zM15 8h1v1h-1zM1 9h1v1h-1zM15 9h1v1h-1zM15 10h1v1h-1zM15 11h1v1h-1zM1 12h1v1h-1zM15 12h1v1h-1zM1 13h1v1h-1zM15 13h1v1h-1zM1 14h15v1h-15z"/><path fill="#000080" d="M2 4h5v1h-5zM10 4h5v1h-5zM2 5h1v1h-1zM9 5h6v1h-6z"/><path fill="#808080" d="M2 6h3v1h-3zM8 6h7v1h-7zM7 7h1v1h-1zM11 7h1v1h-1zM7 8h1v1h-1zM11 8h1v1h-1zM4 9h11v1h-11zM7 10h1v1h-1zM11 10h1v1h-1zM7 11h1v1h-1zM11 11h1v1h-1zM2 12h13v1h-13zM7 13h1v1h-1zM11 13h1v1h-1z"/><path fill="#FFFFFF" d="M2 7h2v1h-2zM8 7h3v1h-3zM12 7h3v1h-3zM2 8h1v1h-1zM6 8h1v1h-1zM8 8h3v1h-3zM12 8h3v1h-3zM3 10h4v1h-4zM8 10h3v1h-3zM12 10h3v1h-3zM2 11h5v1h-5zM8 11h3v1h-3zM12 11h3v1h-3zM2 13h5v1h-5zM8 13h3v1h-3zM12 13h3v1h-3z"/></svg>
<svg style="left:558px;top:50px" width="17" height="15" shape-rendering="crispEdges"><path fill="#8020A0" d="M8 0h1v1h-1zM7 1h1v1h-1zM9 1h2v1h-2zM6 2h1v1h-1zM8 2h5v1h-5zM5 3h1v1h-1zM7 3h3v1h-3zM13 3h2v1h-2zM4 4h1v1h-1zM6 4h3v1h-3zM10 4h2v1h-2zM14 4h2v1h-2zM3 5h1v1h-1zM5 5h7v1h-7zM14 5h1v1h-1zM2 6h1v1h-1zM4 6h7v1h-7zM13 6h1v1h-1zM1 7h1v1h-1zM3 7h7v1h-7zM12 7h1v1h-1zM2 8h10v1h-10zM3 9h5v1h-5zM10 9h1v1h-1zM5 10h3v1h-3zM3 11h1v1h-1zM7 11h2v1h-2zM4 12h1v1h-1zM7 13h1v1h-1z"/><path fill="#000000" d="M9 0h2v1h-2zM11 1h2v1h-2zM13 2h2v1h-2zM15 3h2v1h-2zM16 4h1v1h-1zM15 5h1v1h-1zM14 6h1v1h-1zM13 7h1v1h-1zM1 8h1v1h-1zM12 8h1v1h-1zM14 8h1v1h-1zM1 9h1v1h-1zM11 9h1v1h-1zM13 9h1v1h-1zM2 10h1v1h-1zM10 10h1v1h-1zM12 10h1v1h-1zM2 11h1v1h-1zM4 11h1v1h-1zM9 11h1v1h-1zM11 11h1v1h-1zM3 12h1v1h-1zM5 12h2v1h-2zM8 12h1v1h-1zM10 12h1v1h-1zM4 13h3v1h-3zM8 13h2v1h-2zM6 14h2v1h-2z"/><path fill="#FFFFFF" d="M8 1h1v1h-1zM7 2h1v1h-1zM6 3h1v1h-1zM5 4h1v1h-1zM4 5h1v1h-1zM3 6h1v1h-1zM2 7h1v1h-1zM2 9h1v1h-1zM12 9h1v1h-1zM3 10h2v1h-2zM11 10h1v1h-1zM5 11h2v1h-2zM10 11h1v1h-1zM7 12h1v1h-1zM9 12h1v1h-1z"/><path fill="#FFFF00" d="M10 3h3v1h-3zM9 4h1v1h-1zM12 4h2v1h-2zM12 5h2v1h-2zM11 6h2v1h-2zM10 7h2v1h-2zM8 9h2v1h-2zM8 10h2v1h-2z"/></svg>
<svg style="left:585px;top:50px" width="11" height="14" shape-rendering="crispEdges"><path fill="#808080" d="M2 0h6v1h-6zM1 1h8v1h-8zM0 2h3v1h-3zM6 2h4v1h-4zM0 3h3v1h-3zM7 3h3v1h-3zM6 4h4v1h-4zM5 5h4v1h-4zM4 6h4v1h-4zM4 7h3v1h-3zM4 8h3v1h-3zM4 10h3v1h-3zM4 11h3v1h-3zM4 12h3v1h-3z"/><path fill="#FFFFFF" d="M9 1h1v1h-1zM3 2h1v1h-1zM10 2h1v1h-1zM3 3h1v1h-1zM10 3h1v1h-1zM1 4h2v1h-2zM10 4h1v1h-1zM9 5h1v1h-1zM8 6h1v1h-1zM7 7h1v1h-1zM7 8h1v1h-1zM5 9h2v1h-2zM7 11h1v1h-1zM7 12h1v1h-1zM5 13h3v1h-3z"/></svg>
<svg style="left:617px;top:50px" width="10" height="14" shape-rendering="crispEdges"><path fill="#808080" d="M1 0h1v1h-1zM7 0h1v1h-1zM1 1h1v1h-1zM7 1h1v1h-1zM1 2h1v1h-1zM6 2h1v1h-1zM2 3h1v1h-1zM5 3h1v1h-1zM2 4h1v1h-1zM5 4h1v1h-1zM3 5h2v1h-2zM3 6h2v1h-2zM2 7h1v1h-1zM5 7h1v1h-1zM1 8h3v1h-3zM6 8h3v1h-3zM0 9h1v1h-1zM3 9h1v1h-1zM5 9h1v1h-1zM8 9h1v1h-1zM0 10h1v1h-1zM3 10h2v1h-2zM8 10h1v1h-1zM0 11h1v1h-1zM3 11h2v1h-2zM7 11h1v1h-1zM1 12h2v1h-2zM5 12h2v1h-2z"/><path fill="#FFFFFF" d="M2 2h1v1h-1zM7 2h1v1h-1zM3 3h1v1h-1zM6 3h1v1h-1zM3 4h1v1h-1zM6 4h1v1h-1zM5 5h1v1h-1zM5 6h1v1h-1zM3 7h2v1h-2zM4 8h1v1h-1zM2 9h1v1h-1zM4 9h1v1h-1zM7 9h1v1h-1zM9 9h1v1h-1zM2 10h1v1h-1zM6 10h1v1h-1zM9 10h1v1h-1zM8 11h1v1h-1zM3 12h1v1h-1zM7 12h1v1h-1zM2 13h2v1h-2zM6 13h2v1h-2z"/></svg>
<svg style="left:637px;top:50px" width="15" height="14" shape-rendering="crispEdges"><path fill="#808080" d="M0 0h6v1h-6zM0 1h1v1h-1zM5 1h2v1h-2zM0 2h1v1h-1zM2 2h2v1h-2zM5 2h1v1h-1zM7 2h1v1h-1zM0 3h1v1h-1zM6 3h2v1h-2zM0 4h1v1h-1zM2 4h9v1h-9zM0 5h1v1h-1zM5 5h1v1h-1zM10 5h2v1h-2zM0 6h1v1h-1zM2 6h4v1h-4zM7 6h2v1h-2zM10 6h1v1h-1zM12 6h1v1h-1zM0 7h1v1h-1zM5 7h1v1h-1zM11 7h2v1h-2zM0 8h6v1h-6zM7 8h6v1h-6zM5 9h1v1h-1zM12 9h1v1h-1zM5 10h1v1h-1zM7 10h4v1h-4zM12 10h1v1h-1zM5 11h1v1h-1zM12 11h1v1h-1zM5 12h8v1h-8z"/><path fill="#FFFFFF" d="M1 1h4v1h-4zM1 2h1v1h-1zM4 2h1v1h-1zM6 2h1v1h-1zM1 3h5v1h-5zM1 4h1v1h-1zM1 5h4v1h-4zM6 5h4v1h-4zM1 6h1v1h-1zM6 6h1v1h-1zM9 6h1v1h-1zM11 6h1v1h-1zM1 7h4v1h-4zM6 7h5v1h-5zM13 7h1v1h-1zM6 8h1v1h-1zM13 8h1v1h-1zM1 9h4v1h-4zM6 9h6v1h-6zM13 9h1v1h-1zM6 10h1v1h-1zM11 10h1v1h-1zM13 10h1v1h-1zM6 11h6v1h-6zM13 11h1v1h-1zM13 12h1v1h-1zM6 13h8v1h-8z"/></svg>
<svg style="left:660px;top:50px" width="16" height="14" shape-rendering="crispEdges"><path fill="#808080" d="M5 0h3v1h-3zM2 1h10v1h-10zM1 2h12v1h-12zM0 3h3v1h-3zM9 3h4v1h-4zM0 4h13v1h-13zM0 5h13v1h-13zM0 6h13v1h-13zM0 7h7v1h-7zM0 8h7v1h-7zM8 8h3v1h-3zM12 8h1v1h-1zM0 9h7v1h-7zM13 9h1v1h-1zM0 10h7v1h-7zM8 10h4v1h-4zM13 10h1v1h-1zM0 11h7v1h-7zM13 11h1v1h-1zM1 12h13v1h-13zM7 13h1v1h-1z"/><path fill="#FFFFFF" d="M3 3h6v1h-6zM13 3h1v1h-1zM13 4h1v1h-1zM13 5h1v1h-1zM13 6h1v1h-1zM7 7h7v1h-7zM7 8h1v1h-1zM11 8h1v1h-1zM13 8h1v1h-1zM7 9h6v1h-6zM14 9h1v1h-1zM7 10h1v1h-1zM12 10h1v1h-1zM14 10h1v1h-1zM7 11h6v1h-6zM14 11h1v1h-1zM14 12h1v1h-1zM2 13h5v1h-5zM8 13h7v1h-7z"/></svg>
<div style="left:4px;top:72px;width:952px;height:467px;background:#808080;"></div>
<div style="left:4px;top:72px;width:951px;height:1px;background:#808080;"></div>
<div style="left:4px;top:73px;width:951px;height:1px;background:#404040;"></div>
<div style="left:4px;top:72px;width:1px;height:466px;background:#808080;"></div>
<div style="left:5px;top:73px;width:1px;height:465px;background:#404040;"></div>
<div style="left:955px;top:72px;width:1px;height:467px;background:#FFFFFF;"></div>
<div style="left:4px;top:538px;width:952px;height:1px;background:#FFFFFF;"></div>
<div style="left:954px;top:73px;width:1px;height:465px;background:#D4D0C8;"></div>
<div style="left:5px;top:537px;width:950px;height:1px;background:#D4D0C8;"></div>
<div style="left:6px;top:74px;width:947px;height:437px;background:#D4D0C8;"></div>
<div style="left:7px;top:75px;width:944px;height:1px;background:#FFFFFF;"></div>
<div style="left:7px;top:75px;width:1px;height:434px;background:#FFFFFF;"></div>
<div style="left:951px;top:75px;width:1px;height:435px;background:#808080;"></div>
<div style="left:7px;top:509px;width:945px;height:1px;background:#808080;"></div>
<div style="left:952px;top:74px;width:1px;height:437px;background:#404040;"></div>
<div style="left:6px;top:510px;width:947px;height:1px;background:#404040;"></div>
<div style="left:10px;top:78px;width:939px;height:18px;background:linear-gradient(to right,#0A246A,#A6CAF0);"></div>
<svg style="left:12px;top:79px" width="16" height="15" shape-rendering="crispEdges"><path fill="#000000" d="M8 0h1v1h-1zM7 1h1v1h-1zM9 1h1v1h-1zM0 2h8v1h-8zM10 2h1v1h-1zM0 3h1v1h-1zM11 3h1v1h-1zM0 4h1v1h-1zM12 4h1v1h-1zM0 5h1v1h-1zM13 5h1v1h-1zM0 6h1v1h-1zM14 6h1v1h-1zM0 7h1v1h-1zM15 7h1v1h-1zM0 8h1v1h-1zM15 8h1v1h-1zM0 9h1v1h-1zM3 9h1v1h-1zM7 9h1v1h-1zM9 9h1v1h-1zM11 9h1v1h-1zM15 9h1v1h-1zM0 10h2v1h-2zM3 10h1v1h-1zM5 10h1v1h-1zM7 10h1v1h-1zM9 10h1v1h-1zM11 10h1v1h-1zM13 10h1v1h-1zM15 10h1v1h-1zM0 11h2v1h-2zM3 11h1v1h-1zM5 11h1v1h-1zM7 11h1v1h-1zM11 11h1v1h-1zM13 11h1v1h-1zM15 11h1v1h-1zM0 12h2v1h-2zM3 12h1v1h-1zM7 12h3v1h-3zM11 12h1v1h-1zM15 12h1v1h-1zM0 13h8v1h-8zM10 13h6v1h-6zM9 14h1v1h-1z"/><path fill="#3050C0" d="M8 1h1v1h-1zM8 2h2v1h-2zM8 3h3v1h-3zM7 4h2v1h-2zM7 5h1v1h-1z"/><path fill="#000080" d="M1 3h2v1h-2zM4 3h4v1h-4zM1 4h1v1h-1zM5 4h2v1h-2zM6 5h1v1h-1zM1 6h1v1h-1zM5 6h1v1h-1zM1 7h1v1h-1zM3 7h1v1h-1zM1 8h3v1h-3z"/><path fill="#FFFFFF" d="M3 3h1v1h-1zM2 4h3v1h-3zM1 5h5v1h-5zM2 6h3v1h-3zM2 7h1v1h-1zM4 7h1v1h-1zM1 9h2v1h-2zM4 9h3v1h-3zM8 9h1v1h-1zM10 9h1v1h-1zM12 9h3v1h-3zM2 10h1v1h-1zM4 10h1v1h-1zM6 10h1v1h-1zM8 10h1v1h-1zM10 10h1v1h-1zM12 10h1v1h-1zM14 10h1v1h-1zM2 11h1v1h-1zM4 11h1v1h-1zM6 11h1v1h-1zM8 11h3v1h-3zM12 11h1v1h-1zM14 11h1v1h-1zM2 12h1v1h-1zM4 12h3v1h-3zM10 12h1v1h-1zM12 12h3v1h-3z"/><path fill="#E01818" d="M9 4h3v1h-3zM8 5h5v1h-5zM6 6h8v1h-8zM5 7h10v1h-10zM4 8h11v1h-11zM8 13h2v1h-2zM8 14h1v1h-1z"/></svg>
<div class="t" style="left:30px;top:79px;font-size:12px;font-weight:bold;color:#fff;line-height:18px;letter-spacing:-0.1px;-webkit-text-stroke:0.25px #fff">Federal Summary</div>
<div style="left:931px;top:80px;width:16px;height:14px;background:#D4D0C8;"></div>
<div style="left:931px;top:80px;width:15px;height:1px;background:#D4D0C8;"></div>
<div style="left:931px;top:80px;width:1px;height:13px;background:#D4D0C8;"></div>
<div style="left:932px;top:81px;width:13px;height:1px;background:#FFFFFF;"></div>
<div style="left:932px;top:81px;width:1px;height:11px;background:#FFFFFF;"></div>
<div style="left:945px;top:81px;width:1px;height:12px;background:#808080;"></div>
<div style="left:932px;top:92px;width:14px;height:1px;background:#808080;"></div>
<div style="left:946px;top:80px;width:1px;height:14px;background:#404040;"></div>
<div style="left:931px;top:93px;width:16px;height:1px;background:#404040;"></div>
<div style="left:913px;top:80px;width:16px;height:14px;background:#D4D0C8;"></div>
<div style="left:913px;top:80px;width:15px;height:1px;background:#D4D0C8;"></div>
<div style="left:913px;top:80px;width:1px;height:13px;background:#D4D0C8;"></div>
<div style="left:914px;top:81px;width:13px;height:1px;background:#FFFFFF;"></div>
<div style="left:914px;top:81px;width:1px;height:11px;background:#FFFFFF;"></div>
<div style="left:927px;top:81px;width:1px;height:12px;background:#808080;"></div>
<div style="left:914px;top:92px;width:14px;height:1px;background:#808080;"></div>
<div style="left:928px;top:80px;width:1px;height:14px;background:#404040;"></div>
<div style="left:913px;top:93px;width:16px;height:1px;background:#404040;"></div>
<div style="left:897px;top:80px;width:16px;height:14px;background:#D4D0C8;"></div>
<div style="left:897px;top:80px;width:15px;height:1px;background:#D4D0C8;"></div>
<div style="left:897px;top:80px;width:1px;height:13px;background:#D4D0C8;"></div>
<div style="left:898px;top:81px;width:13px;height:1px;background:#FFFFFF;"></div>
<div style="left:898px;top:81px;width:1px;height:11px;background:#FFFFFF;"></div>
<div style="left:911px;top:81px;width:1px;height:12px;background:#808080;"></div>
<div style="left:898px;top:92px;width:14px;height:1px;background:#808080;"></div>
<div style="left:912px;top:80px;width:1px;height:14px;background:#404040;"></div>
<div style="left:897px;top:93px;width:16px;height:1px;background:#404040;"></div>
<div style="left:901px;top:89px;width:6px;height:2px;background:#000;"></div>
<div style="left:916px;top:82px;width:9px;height:9px;background:transparent;border:1px solid #000;border-top-width:2px;box-sizing:border-box"></div>
<svg style="position:absolute;left:931px;top:80px" width="16" height="14"><path d="M4 3 L11 10 M5 3 L12 10 M11 3 L4 10 M12 3 L5 10" stroke="#000" stroke-width="1" shape-rendering="crispEdges"/></svg>
<div style="left:10px;top:97px;width:939px;height:1px;background:#808080;"></div>
<div style="left:10px;top:97px;width:1px;height:410px;background:#808080;"></div>
<div style="left:11px;top:98px;width:937px;height:1px;background:#404040;"></div>
<div style="left:11px;top:98px;width:1px;height:408px;background:#404040;"></div>
<div style="left:948px;top:97px;width:1px;height:410px;background:#FFFFFF;"></div>
<div style="left:10px;top:506px;width:939px;height:1px;background:#FFFFFF;"></div>
<div style="left:947px;top:98px;width:1px;height:408px;background:#D4D0C8;"></div>
<div style="left:11px;top:505px;width:937px;height:1px;background:#D4D0C8;"></div>
<div style="left:12px;top:99px;width:919px;height:390px;background:#383838;overflow:hidden">
<div style="left:1px;top:1px;width:918px;height:49px;background:#C6C4C4;"></div><div class="t" style="left:6px;top:1px;width:200px;height:16px;text-align:left;font-size:12px;font-weight:bold;color:#202070;line-height:16px;overflow:hidden;-webkit-text-stroke:0.2px #202070">Federal Summary</div><div style="left:265px;top:17px;width:654px;height:1px;background:#484848;"></div><div class="t" style="left:264px;top:1px;width:254px;height:16px;text-align:center;font-size:12px;font-weight:bold;color:#202070;line-height:16px;overflow:hidden;-webkit-text-stroke:0.2px #202070">Case 1</div><div class="t" style="left:519px;top:1px;width:254px;height:16px;text-align:center;font-size:12px;font-weight:bold;color:#202070;line-height:16px;overflow:hidden;-webkit-text-stroke:0.2px #202070">Case 2</div><div class="t" style="left:774px;top:1px;width:254px;height:16px;text-align:center;font-size:12px;font-weight:bold;color:#202070;line-height:16px;overflow:hidden;-webkit-text-stroke:0.2px #202070">Case 3</div><div style="left:349px;top:18px;width:1px;height:32px;background:#484848;"></div><div style="left:434px;top:18px;width:1px;height:32px;background:#484848;"></div><div style="left:519px;top:1px;width:1px;height:49px;background:#484848;"></div><div style="left:604px;top:18px;width:1px;height:32px;background:#484848;"></div><div style="left:689px;top:18px;width:1px;height:32px;background:#484848;"></div><div style="left:774px;top:1px;width:1px;height:49px;background:#484848;"></div><div style="left:859px;top:18px;width:1px;height:32px;background:#484848;"></div><div class="t" style="left:265px;top:18px;width:84px;height:32px;text-align:center;font-size:12px;font-weight:normal;color:#000;line-height:16px;overflow:hidden;letter-spacing:-0.3px">2009<br>Year 1</div><div class="t" style="left:350px;top:18px;width:84px;height:32px;text-align:center;font-size:12px;font-weight:normal;color:#000;line-height:16px;overflow:hidden;letter-spacing:-0.3px">2010<br>Year 2</div><div class="t" style="left:435px;top:18px;width:84px;height:32px;text-align:center;font-size:12px;font-weight:normal;color:#000;line-height:16px;overflow:hidden;letter-spacing:-0.3px">2011<br>Year 3</div><div class="t" style="left:520px;top:18px;width:84px;height:32px;text-align:center;font-size:12px;font-weight:normal;color:#000;line-height:16px;overflow:hidden;letter-spacing:-0.3px">2009<br>Year 1</div><div class="t" style="left:605px;top:18px;width:84px;height:32px;text-align:center;font-size:12px;font-weight:normal;color:#000;line-height:16px;overflow:hidden;letter-spacing:-0.3px">2010<br>Year 2</div><div class="t" style="left:690px;top:18px;width:84px;height:32px;text-align:center;font-size:12px;font-weight:normal;color:#000;line-height:16px;overflow:hidden;letter-spacing:-0.3px">2011<br>Year 3</div><div class="t" style="left:775px;top:18px;width:84px;height:32px;text-align:center;font-size:12px;font-weight:normal;color:#000;line-height:16px;overflow:hidden;letter-spacing:-0.3px">2009<br>Year 1</div><div class="t" style="left:860px;top:18px;width:84px;height:32px;text-align:center;font-size:12px;font-weight:normal;color:#000;line-height:16px;overflow:hidden;letter-spacing:-0.3px">2010<br>Year 2</div><div style="left:1px;top:50px;width:918px;height:2px;background:#000;"></div><div style="left:264px;top:1px;width:1px;height:389px;background:#000;"></div><div style="left:1px;top:52px;width:918px;height:16px;background:#C6C4C4;"></div><div style="left:1px;top:68px;width:918px;height:1px;background:#484848;"></div><div class="t" style="left:5px;top:52px;width:240px;height:16px;text-align:left;font-size:12px;font-weight:normal;color:#000;line-height:16px;overflow:hidden;">Taxpayer Information</div><svg style="left:248px;top:57px" width="11" height="10" viewBox="0 0 11 10" shape-rendering="crispEdges"><path d="M2.5 0.5 H10.5 V9.5 H2.5 Z" fill="none" stroke="#202070" stroke-width="1"/><rect x="0" y="4" width="6" height="2" fill="#202070"/><path d="M4 2 L8 5 L4 8 Z" fill="#202070"/></svg><div class="t" style="left:262px;top:52px;width:88px;height:16px;text-align:center;font-size:12px;font-weight:normal;color:#000;line-height:16px;overflow:hidden;letter-spacing:-0.1px">MFJ, 5 Exempt</div><div class="t" style="left:347px;top:52px;width:88px;height:16px;text-align:center;font-size:12px;font-weight:normal;color:#000;line-height:16px;overflow:hidden;letter-spacing:-0.1px">MFJ, 5 Exempt</div><div class="t" style="left:432px;top:52px;width:88px;height:16px;text-align:center;font-size:12px;font-weight:normal;color:#000;line-height:16px;overflow:hidden;letter-spacing:-0.1px">MFJ, 5 Exempt</div><div class="t" style="left:517px;top:52px;width:88px;height:16px;text-align:center;font-size:12px;font-weight:normal;color:#000;line-height:16px;overflow:hidden;letter-spacing:-0.1px">MFS, 4 Exempt</div><div class="t" style="left:602px;top:52px;width:88px;height:16px;text-align:center;font-size:12px;font-weight:normal;color:#000;line-height:16px;overflow:hidden;letter-spacing:-0.1px">MFS, 4 Exempt</div><div class="t" style="left:687px;top:52px;width:88px;height:16px;text-align:center;font-size:12px;font-weight:normal;color:#000;line-height:16px;overflow:hidden;letter-spacing:-0.1px">MFS, 4 Exempt</div><div class="t" style="left:772px;top:52px;width:88px;height:16px;text-align:center;font-size:12px;font-weight:normal;color:#000;line-height:16px;overflow:hidden;letter-spacing:-0.1px">S, 4 Exempt</div><div class="t" style="left:857px;top:52px;width:88px;height:16px;text-align:center;font-size:12px;font-weight:normal;color:#000;line-height:16px;overflow:hidden;letter-spacing:-0.1px">S, 4 Exempt</div><div style="left:1px;top:69px;width:918px;height:16px;background:#fff;"></div><div style="left:1px;top:85px;width:918px;height:1px;background:#484848;"></div><div class="t" style="left:5px;top:69px;width:240px;height:16px;text-align:left;font-size:12px;font-weight:normal;color:#000;line-height:16px;overflow:hidden;">Wages and Business Income</div><svg style="left:248px;top:74px" width="11" height="10" viewBox="0 0 11 10" shape-rendering="crispEdges"><path d="M2.5 0.5 H10.5 V9.5 H2.5 Z" fill="none" stroke="#202070" stroke-width="1"/><rect x="0" y="4" width="6" height="2" fill="#202070"/><path d="M4 2 L8 5 L4 8 Z" fill="#202070"/></svg><div class="t" style="left:265px;top:69px;width:79px;height:16px;text-align:right;font-size:12px;font-weight:normal;color:#000;line-height:16px;overflow:hidden;letter-spacing:-0.55px">113,642</div><div class="t" style="left:350px;top:69px;width:79px;height:16px;text-align:right;font-size:12px;font-weight:normal;color:#A83C9C;line-height:16px;overflow:hidden;letter-spacing:-0.55px">121,850</div><div class="t" style="left:435px;top:69px;width:79px;height:16px;text-align:right;font-size:12px;font-weight:normal;color:#A83C9C;line-height:16px;overflow:hidden;letter-spacing:-0.55px">130,120</div><div class="t" style="left:520px;top:69px;width:79px;height:16px;text-align:right;font-size:12px;font-weight:normal;color:#000;line-height:16px;overflow:hidden;letter-spacing:-0.55px">113,642</div><div class="t" style="left:605px;top:69px;width:79px;height:16px;text-align:right;font-size:12px;font-weight:normal;color:#A83C9C;line-height:16px;overflow:hidden;letter-spacing:-0.55px">121,850</div><div class="t" style="left:690px;top:69px;width:79px;height:16px;text-align:right;font-size:12px;font-weight:normal;color:#A83C9C;line-height:16px;overflow:hidden;letter-spacing:-0.55px">130,120</div><div class="t" style="left:775px;top:69px;width:79px;height:16px;text-align:right;font-size:12px;font-weight:normal;color:#000;line-height:16px;overflow:hidden;letter-spacing:-0.55px">113,642</div><div class="t" style="left:860px;top:69px;width:79px;height:16px;text-align:right;font-size:12px;font-weight:normal;color:#A83C9C;line-height:16px;overflow:hidden;letter-spacing:-0.55px">121,850</div><div style="left:1px;top:86px;width:918px;height:16px;background:#fff;"></div><div style="left:1px;top:102px;width:918px;height:1px;background:#484848;"></div><div class="t" style="left:5px;top:86px;width:240px;height:16px;text-align:left;font-size:12px;font-weight:normal;color:#000;line-height:16px;overflow:hidden;">Rental/Royalty Income</div><svg style="left:248px;top:91px" width="11" height="10" viewBox="0 0 11 10" shape-rendering="crispEdges"><path d="M2.5 0.5 H10.5 V9.5 H2.5 Z" fill="none" stroke="#202070" stroke-width="1"/><rect x="0" y="4" width="6" height="2" fill="#202070"/><path d="M4 2 L8 5 L4 8 Z" fill="#202070"/></svg><div class="t" style="left:265px;top:86px;width:79px;height:16px;text-align:right;font-size:12px;font-weight:normal;color:#000;line-height:16px;overflow:hidden;letter-spacing:-0.55px">1,120</div><div class="t" style="left:350px;top:86px;width:79px;height:16px;text-align:right;font-size:12px;font-weight:normal;color:#A83C9C;line-height:16px;overflow:hidden;letter-spacing:-0.55px">1,200</div><div class="t" style="left:435px;top:86px;width:79px;height:16px;text-align:right;font-size:12px;font-weight:normal;color:#A83C9C;line-height:16px;overflow:hidden;letter-spacing:-0.55px">1,285</div><div class="t" style="left:520px;top:86px;width:79px;height:16px;text-align:right;font-size:12px;font-weight:normal;color:#000;line-height:16px;overflow:hidden;letter-spacing:-0.55px">1,120</div><div class="t" style="left:605px;top:86px;width:79px;height:16px;text-align:right;font-size:12px;font-weight:normal;color:#A83C9C;line-height:16px;overflow:hidden;letter-spacing:-0.55px">1,200</div><div class="t" style="left:690px;top:86px;width:79px;height:16px;text-align:right;font-size:12px;font-weight:normal;color:#A83C9C;line-height:16px;overflow:hidden;letter-spacing:-0.55px">1,285</div><div class="t" style="left:775px;top:86px;width:79px;height:16px;text-align:right;font-size:12px;font-weight:normal;color:#000;line-height:16px;overflow:hidden;letter-spacing:-0.55px">1,120</div><div class="t" style="left:860px;top:86px;width:79px;height:16px;text-align:right;font-size:12px;font-weight:normal;color:#A83C9C;line-height:16px;overflow:hidden;letter-spacing:-0.55px">1,200</div><div style="left:1px;top:103px;width:918px;height:16px;background:#fff;"></div><div style="left:1px;top:119px;width:918px;height:1px;background:#484848;"></div><div class="t" style="left:5px;top:103px;width:240px;height:16px;text-align:left;font-size:12px;font-weight:normal;color:#000;line-height:16px;overflow:hidden;">Income from Passthroughs</div><svg style="left:248px;top:108px" width="11" height="10" viewBox="0 0 11 10" shape-rendering="crispEdges"><path d="M2.5 0.5 H10.5 V9.5 H2.5 Z" fill="none" stroke="#202070" stroke-width="1"/><rect x="0" y="4" width="6" height="2" fill="#202070"/><path d="M4 2 L8 5 L4 8 Z" fill="#202070"/></svg><div class="t" style="left:265px;top:103px;width:79px;height:16px;text-align:right;font-size:12px;font-weight:normal;color:#E02020;line-height:16px;overflow:hidden;letter-spacing:-0.55px">-10,212</div><div class="t" style="left:350px;top:103px;width:79px;height:16px;text-align:right;font-size:12px;font-weight:normal;color:#E02020;line-height:16px;overflow:hidden;letter-spacing:-0.55px">-10,212</div><div class="t" style="left:435px;top:103px;width:79px;height:16px;text-align:right;font-size:12px;font-weight:normal;color:#E02020;line-height:16px;overflow:hidden;letter-spacing:-0.55px">-10,212</div><div class="t" style="left:520px;top:103px;width:79px;height:16px;text-align:right;font-size:12px;font-weight:normal;color:#E02020;line-height:16px;overflow:hidden;letter-spacing:-0.55px">-10,212</div><div class="t" style="left:605px;top:103px;width:79px;height:16px;text-align:right;font-size:12px;font-weight:normal;color:#E02020;line-height:16px;overflow:hidden;letter-spacing:-0.55px">-10,212</div><div class="t" style="left:690px;top:103px;width:79px;height:16px;text-align:right;font-size:12px;font-weight:normal;color:#E02020;line-height:16px;overflow:hidden;letter-spacing:-0.55px">-10,212</div><div class="t" style="left:775px;top:103px;width:79px;height:16px;text-align:right;font-size:12px;font-weight:normal;color:#E02020;line-height:16px;overflow:hidden;letter-spacing:-0.55px">-10,212</div><div class="t" style="left:860px;top:103px;width:79px;height:16px;text-align:right;font-size:12px;font-weight:normal;color:#E02020;line-height:16px;overflow:hidden;letter-spacing:-0.55px">-10,212</div><div style="left:1px;top:120px;width:918px;height:16px;background:#fff;"></div><div style="left:1px;top:136px;width:918px;height:1px;background:#484848;"></div><div class="t" style="left:5px;top:120px;width:240px;height:16px;text-align:left;font-size:12px;font-weight:normal;color:#000;line-height:16px;overflow:hidden;">Capital and Other Gains</div><svg style="left:248px;top:125px" width="11" height="10" viewBox="0 0 11 10" shape-rendering="crispEdges"><path d="M2.5 0.5 H10.5 V9.5 H2.5 Z" fill="none" stroke="#202070" stroke-width="1"/><rect x="0" y="4" width="6" height="2" fill="#202070"/><path d="M4 2 L8 5 L4 8 Z" fill="#202070"/></svg><div class="t" style="left:265px;top:120px;width:79px;height:16px;text-align:right;font-size:12px;font-weight:normal;color:#000;line-height:16px;overflow:hidden;letter-spacing:-0.55px">10,138</div><div class="t" style="left:350px;top:120px;width:79px;height:16px;text-align:right;font-size:12px;font-weight:normal;color:#000;line-height:16px;overflow:hidden;letter-spacing:-0.55px">10,138</div><div class="t" style="left:435px;top:120px;width:79px;height:16px;text-align:right;font-size:12px;font-weight:normal;color:#000;line-height:16px;overflow:hidden;letter-spacing:-0.55px">10,138</div><div class="t" style="left:520px;top:120px;width:79px;height:16px;text-align:right;font-size:12px;font-weight:normal;color:#000;line-height:16px;overflow:hidden;letter-spacing:-0.55px">10,138</div><div class="t" style="left:605px;top:120px;width:79px;height:16px;text-align:right;font-size:12px;font-weight:normal;color:#000;line-height:16px;overflow:hidden;letter-spacing:-0.55px">10,138</div><div class="t" style="left:690px;top:120px;width:79px;height:16px;text-align:right;font-size:12px;font-weight:normal;color:#000;line-height:16px;overflow:hidden;letter-spacing:-0.55px">10,138</div><div class="t" style="left:775px;top:120px;width:79px;height:16px;text-align:right;font-size:12px;font-weight:normal;color:#000;line-height:16px;overflow:hidden;letter-spacing:-0.55px">10,138</div><div class="t" style="left:860px;top:120px;width:79px;height:16px;text-align:right;font-size:12px;font-weight:normal;color:#000;line-height:16px;overflow:hidden;letter-spacing:-0.55px">10,138</div><div style="left:1px;top:137px;width:918px;height:16px;background:#fff;"></div><div style="left:1px;top:153px;width:918px;height:1px;background:#484848;"></div><div class="t" style="left:5px;top:137px;width:240px;height:16px;text-align:left;font-size:12px;font-weight:normal;color:#000;line-height:16px;overflow:hidden;">Portfolio Income</div><svg style="left:248px;top:142px" width="11" height="10" viewBox="0 0 11 10" shape-rendering="crispEdges"><path d="M2.5 0.5 H10.5 V9.5 H2.5 Z" fill="none" stroke="#202070" stroke-width="1"/><rect x="0" y="4" width="6" height="2" fill="#202070"/><path d="M4 2 L8 5 L4 8 Z" fill="#202070"/></svg><div class="t" style="left:265px;top:137px;width:79px;height:16px;text-align:right;font-size:12px;font-weight:normal;color:#000;line-height:16px;overflow:hidden;letter-spacing:-0.55px">16,859</div><div class="t" style="left:350px;top:137px;width:79px;height:16px;text-align:right;font-size:12px;font-weight:normal;color:#000;line-height:16px;overflow:hidden;letter-spacing:-0.55px">16,859</div><div class="t" style="left:435px;top:137px;width:79px;height:16px;text-align:right;font-size:12px;font-weight:normal;color:#000;line-height:16px;overflow:hidden;letter-spacing:-0.55px">16,859</div><div class="t" style="left:520px;top:137px;width:79px;height:16px;text-align:right;font-size:12px;font-weight:normal;color:#000;line-height:16px;overflow:hidden;letter-spacing:-0.55px">16,859</div><div class="t" style="left:605px;top:137px;width:79px;height:16px;text-align:right;font-size:12px;font-weight:normal;color:#000;line-height:16px;overflow:hidden;letter-spacing:-0.55px">16,859</div><div class="t" style="left:690px;top:137px;width:79px;height:16px;text-align:right;font-size:12px;font-weight:normal;color:#000;line-height:16px;overflow:hidden;letter-spacing:-0.55px">16,859</div><div class="t" style="left:775px;top:137px;width:79px;height:16px;text-align:right;font-size:12px;font-weight:normal;color:#000;line-height:16px;overflow:hidden;letter-spacing:-0.55px">16,859</div><div class="t" style="left:860px;top:137px;width:79px;height:16px;text-align:right;font-size:12px;font-weight:normal;color:#000;line-height:16px;overflow:hidden;letter-spacing:-0.55px">16,859</div><div style="left:1px;top:154px;width:918px;height:16px;background:#fff;"></div><div style="left:1px;top:170px;width:918px;height:1px;background:#484848;"></div><div class="t" style="left:5px;top:154px;width:240px;height:16px;text-align:left;font-size:12px;font-weight:normal;color:#000;line-height:16px;overflow:hidden;">Other Income</div><svg style="left:248px;top:159px" width="11" height="10" viewBox="0 0 11 10" shape-rendering="crispEdges"><path d="M2.5 0.5 H10.5 V9.5 H2.5 Z" fill="none" stroke="#202070" stroke-width="1"/><rect x="0" y="4" width="6" height="2" fill="#202070"/><path d="M4 2 L8 5 L4 8 Z" fill="#202070"/></svg><div class="t" style="left:265px;top:154px;width:79px;height:16px;text-align:right;font-size:12px;font-weight:normal;color:#000;line-height:16px;overflow:hidden;letter-spacing:-0.55px">6,236</div><div class="t" style="left:350px;top:154px;width:79px;height:16px;text-align:right;font-size:12px;font-weight:normal;color:#000;line-height:16px;overflow:hidden;letter-spacing:-0.55px">5,775</div><div class="t" style="left:435px;top:154px;width:79px;height:16px;text-align:right;font-size:12px;font-weight:normal;color:#000;line-height:16px;overflow:hidden;letter-spacing:-0.55px">5,391</div><div class="t" style="left:520px;top:154px;width:79px;height:16px;text-align:right;font-size:12px;font-weight:normal;color:#000;line-height:16px;overflow:hidden;letter-spacing:-0.55px">6,236</div><div class="t" style="left:605px;top:154px;width:79px;height:16px;text-align:right;font-size:12px;font-weight:normal;color:#000;line-height:16px;overflow:hidden;letter-spacing:-0.55px">4,600</div><div class="t" style="left:690px;top:154px;width:79px;height:16px;text-align:right;font-size:12px;font-weight:normal;color:#000;line-height:16px;overflow:hidden;letter-spacing:-0.55px">4,600</div><div class="t" style="left:775px;top:154px;width:79px;height:16px;text-align:right;font-size:12px;font-weight:normal;color:#000;line-height:16px;overflow:hidden;letter-spacing:-0.55px">6,236</div><div class="t" style="left:860px;top:154px;width:79px;height:16px;text-align:right;font-size:12px;font-weight:normal;color:#000;line-height:16px;overflow:hidden;letter-spacing:-0.55px">5,775</div><div style="left:1px;top:171px;width:918px;height:16px;background:#C6C4C4;"></div><div style="left:1px;top:187px;width:918px;height:1px;background:#484848;"></div><div class="t" style="left:11px;top:171px;width:240px;height:16px;text-align:left;font-size:12px;font-weight:bold;color:#202070;line-height:16px;overflow:hidden;letter-spacing:-0.2px;-webkit-text-stroke:0.2px #202070">Total Income</div><div class="t" style="left:265px;top:171px;width:79px;height:16px;text-align:right;font-size:12px;font-weight:bold;color:#000;line-height:16px;overflow:hidden;letter-spacing:-0.55px;-webkit-text-stroke:0.35px #000">137,783</div><div class="t" style="left:350px;top:171px;width:79px;height:16px;text-align:right;font-size:12px;font-weight:bold;color:#000;line-height:16px;overflow:hidden;letter-spacing:-0.55px;-webkit-text-stroke:0.35px #000">145,610</div><div class="t" style="left:435px;top:171px;width:79px;height:16px;text-align:right;font-size:12px;font-weight:bold;color:#000;line-height:16px;overflow:hidden;letter-spacing:-0.55px;-webkit-text-stroke:0.35px #000">153,581</div><div class="t" style="left:520px;top:171px;width:79px;height:16px;text-align:right;font-size:12px;font-weight:bold;color:#000;line-height:16px;overflow:hidden;letter-spacing:-0.55px;-webkit-text-stroke:0.35px #000">137,783</div><div class="t" style="left:605px;top:171px;width:79px;height:16px;text-align:right;font-size:12px;font-weight:bold;color:#000;line-height:16px;overflow:hidden;letter-spacing:-0.55px;-webkit-text-stroke:0.35px #000">144,435</div><div class="t" style="left:690px;top:171px;width:79px;height:16px;text-align:right;font-size:12px;font-weight:bold;color:#000;line-height:16px;overflow:hidden;letter-spacing:-0.55px;-webkit-text-stroke:0.35px #000">152,790</div><div class="t" style="left:775px;top:171px;width:79px;height:16px;text-align:right;font-size:12px;font-weight:bold;color:#000;line-height:16px;overflow:hidden;letter-spacing:-0.55px;-webkit-text-stroke:0.35px #000">137,783</div><div class="t" style="left:860px;top:171px;width:79px;height:16px;text-align:right;font-size:12px;font-weight:bold;color:#000;line-height:16px;overflow:hidden;letter-spacing:-0.55px;-webkit-text-stroke:0.35px #000">145,610</div><div style="left:1px;top:188px;width:918px;height:16px;background:#fff;"></div><div style="left:1px;top:204px;width:918px;height:1px;background:#484848;"></div><div class="t" style="left:5px;top:188px;width:240px;height:16px;text-align:left;font-size:12px;font-weight:normal;color:#000;line-height:16px;overflow:hidden;">Adjustments to Income</div><svg style="left:248px;top:193px" width="11" height="10" viewBox="0 0 11 10" shape-rendering="crispEdges"><path d="M2.5 0.5 H10.5 V9.5 H2.5 Z" fill="none" stroke="#202070" stroke-width="1"/><rect x="0" y="4" width="6" height="2" fill="#202070"/><path d="M4 2 L8 5 L4 8 Z" fill="#202070"/></svg><div class="t" style="left:265px;top:188px;width:79px;height:16px;text-align:right;font-size:12px;font-weight:normal;color:#000;line-height:16px;overflow:hidden;letter-spacing:-0.55px">3,619</div><div class="t" style="left:350px;top:188px;width:79px;height:16px;text-align:right;font-size:12px;font-weight:normal;color:#000;line-height:16px;overflow:hidden;letter-spacing:-0.55px">3,619</div><div class="t" style="left:435px;top:188px;width:79px;height:16px;text-align:right;font-size:12px;font-weight:normal;color:#000;line-height:16px;overflow:hidden;letter-spacing:-0.55px">3,787</div><div class="t" style="left:520px;top:188px;width:79px;height:16px;text-align:right;font-size:12px;font-weight:normal;color:#000;line-height:16px;overflow:hidden;letter-spacing:-0.55px">3,651</div><div class="t" style="left:605px;top:188px;width:79px;height:16px;text-align:right;font-size:12px;font-weight:normal;color:#000;line-height:16px;overflow:hidden;letter-spacing:-0.55px">3,651</div><div class="t" style="left:690px;top:188px;width:79px;height:16px;text-align:right;font-size:12px;font-weight:normal;color:#000;line-height:16px;overflow:hidden;letter-spacing:-0.55px">3,785</div><div class="t" style="left:775px;top:188px;width:79px;height:16px;text-align:right;font-size:12px;font-weight:normal;color:#000;line-height:16px;overflow:hidden;letter-spacing:-0.55px">3,651</div><div class="t" style="left:860px;top:188px;width:79px;height:16px;text-align:right;font-size:12px;font-weight:normal;color:#000;line-height:16px;overflow:hidden;letter-spacing:-0.55px">3,651</div><div style="left:1px;top:205px;width:918px;height:16px;background:#C6C4C4;"></div><div style="left:1px;top:221px;width:918px;height:1px;background:#484848;"></div><div class="t" style="left:11px;top:205px;width:240px;height:16px;text-align:left;font-size:12px;font-weight:bold;color:#202070;line-height:16px;overflow:hidden;letter-spacing:-0.2px;-webkit-text-stroke:0.2px #202070">Adjusted Gross Income</div><div class="t" style="left:265px;top:205px;width:79px;height:16px;text-align:right;font-size:12px;font-weight:bold;color:#000;line-height:16px;overflow:hidden;letter-spacing:-0.55px;-webkit-text-stroke:0.35px #000">134,164</div><div class="t" style="left:350px;top:205px;width:79px;height:16px;text-align:right;font-size:12px;font-weight:bold;color:#000;line-height:16px;overflow:hidden;letter-spacing:-0.55px;-webkit-text-stroke:0.35px #000">141,991</div><div class="t" style="left:435px;top:205px;width:79px;height:16px;text-align:right;font-size:12px;font-weight:bold;color:#000;line-height:16px;overflow:hidden;letter-spacing:-0.55px;-webkit-text-stroke:0.35px #000">149,794</div><div class="t" style="left:520px;top:205px;width:79px;height:16px;text-align:right;font-size:12px;font-weight:bold;color:#000;line-height:16px;overflow:hidden;letter-spacing:-0.55px;-webkit-text-stroke:0.35px #000">134,132</div><div class="t" style="left:605px;top:205px;width:79px;height:16px;text-align:right;font-size:12px;font-weight:bold;color:#000;line-height:16px;overflow:hidden;letter-spacing:-0.55px;-webkit-text-stroke:0.35px #000">140,784</div><div class="t" style="left:690px;top:205px;width:79px;height:16px;text-align:right;font-size:12px;font-weight:bold;color:#000;line-height:16px;overflow:hidden;letter-spacing:-0.55px;-webkit-text-stroke:0.35px #000">149,005</div><div class="t" style="left:775px;top:205px;width:79px;height:16px;text-align:right;font-size:12px;font-weight:bold;color:#000;line-height:16px;overflow:hidden;letter-spacing:-0.55px;-webkit-text-stroke:0.35px #000">134,132</div><div class="t" style="left:860px;top:205px;width:79px;height:16px;text-align:right;font-size:12px;font-weight:bold;color:#000;line-height:16px;overflow:hidden;letter-spacing:-0.55px;-webkit-text-stroke:0.35px #000">141,991</div><div style="left:1px;top:222px;width:918px;height:16px;background:#fff;"></div><div style="left:1px;top:238px;width:918px;height:1px;background:#484848;"></div><div class="t" style="left:5px;top:222px;width:240px;height:16px;text-align:left;font-size:12px;font-weight:normal;color:#000;line-height:16px;overflow:hidden;">Itemized Deductions</div><svg style="left:248px;top:227px" width="11" height="10" viewBox="0 0 11 10" shape-rendering="crispEdges"><path d="M2.5 0.5 H10.5 V9.5 H2.5 Z" fill="none" stroke="#202070" stroke-width="1"/><rect x="0" y="4" width="6" height="2" fill="#202070"/><path d="M4 2 L8 5 L4 8 Z" fill="#202070"/></svg><div class="t" style="left:265px;top:222px;width:79px;height:16px;text-align:right;font-size:12px;font-weight:normal;color:#000;line-height:16px;overflow:hidden;letter-spacing:-0.55px">24,288</div><div class="t" style="left:350px;top:222px;width:79px;height:16px;text-align:right;font-size:12px;font-weight:normal;color:#000;line-height:16px;overflow:hidden;letter-spacing:-0.55px">24,288</div><div class="t" style="left:435px;top:222px;width:79px;height:16px;text-align:right;font-size:12px;font-weight:normal;color:#000;line-height:16px;overflow:hidden;letter-spacing:-0.55px">24,288</div><div class="t" style="left:775px;top:222px;width:79px;height:16px;text-align:right;font-size:12px;font-weight:normal;color:#000;line-height:16px;overflow:hidden;letter-spacing:-0.55px">24,288</div><div class="t" style="left:860px;top:222px;width:79px;height:16px;text-align:right;font-size:12px;font-weight:normal;color:#000;line-height:16px;overflow:hidden;letter-spacing:-0.55px">24,288</div><div style="left:1px;top:239px;width:918px;height:16px;background:#C6C4C4;"></div><div style="left:1px;top:255px;width:918px;height:1px;background:#484848;"></div><div class="t" style="left:5px;top:239px;width:240px;height:16px;text-align:left;font-size:12px;font-weight:normal;color:#000;line-height:16px;overflow:hidden;">Standard Deduction</div><div class="t" style="left:520px;top:239px;width:79px;height:16px;text-align:right;font-size:12px;font-weight:normal;color:#000;line-height:16px;overflow:hidden;letter-spacing:-0.55px">6,200</div><div class="t" style="left:605px;top:239px;width:79px;height:16px;text-align:right;font-size:12px;font-weight:normal;color:#000;line-height:16px;overflow:hidden;letter-spacing:-0.55px">5,700</div><div class="t" style="left:690px;top:239px;width:79px;height:16px;text-align:right;font-size:12px;font-weight:normal;color:#000;line-height:16px;overflow:hidden;letter-spacing:-0.55px">5,850</div><div style="left:1px;top:256px;width:918px;height:16px;background:#C6C4C4;"></div><div style="left:1px;top:272px;width:918px;height:1px;background:#484848;"></div><div class="t" style="left:5px;top:256px;width:240px;height:16px;text-align:left;font-size:12px;font-weight:normal;color:#000;line-height:16px;overflow:hidden;">Exemptions</div><div class="t" style="left:265px;top:256px;width:79px;height:16px;text-align:right;font-size:12px;font-weight:normal;color:#000;line-height:16px;overflow:hidden;letter-spacing:-0.55px">18,250</div><div class="t" style="left:350px;top:256px;width:79px;height:16px;text-align:right;font-size:12px;font-weight:normal;color:#000;line-height:16px;overflow:hidden;letter-spacing:-0.55px">18,250</div><div class="t" style="left:435px;top:256px;width:79px;height:16px;text-align:right;font-size:12px;font-weight:normal;color:#000;line-height:16px;overflow:hidden;letter-spacing:-0.55px">18,750</div><div class="t" style="left:520px;top:256px;width:79px;height:16px;text-align:right;font-size:12px;font-weight:normal;color:#000;line-height:16px;overflow:hidden;letter-spacing:-0.55px">13,821</div><div class="t" style="left:605px;top:256px;width:79px;height:16px;text-align:right;font-size:12px;font-weight:normal;color:#000;line-height:16px;overflow:hidden;letter-spacing:-0.55px">14,600</div><div class="t" style="left:690px;top:256px;width:79px;height:16px;text-align:right;font-size:12px;font-weight:normal;color:#000;line-height:16px;overflow:hidden;letter-spacing:-0.55px">15,000</div><div class="t" style="left:775px;top:256px;width:79px;height:16px;text-align:right;font-size:12px;font-weight:normal;color:#000;line-height:16px;overflow:hidden;letter-spacing:-0.55px">14,600</div><div class="t" style="left:860px;top:256px;width:79px;height:16px;text-align:right;font-size:12px;font-weight:normal;color:#000;line-height:16px;overflow:hidden;letter-spacing:-0.55px">14,600</div><div style="left:1px;top:273px;width:918px;height:16px;background:#C6C4C4;"></div><div style="left:1px;top:289px;width:918px;height:1px;background:#484848;"></div><div class="t" style="left:11px;top:273px;width:240px;height:16px;text-align:left;font-size:12px;font-weight:bold;color:#202070;line-height:16px;overflow:hidden;letter-spacing:-0.2px;-webkit-text-stroke:0.2px #202070">Taxable Income</div><div class="t" style="left:265px;top:273px;width:79px;height:16px;text-align:right;font-size:12px;font-weight:bold;color:#000;line-height:16px;overflow:hidden;letter-spacing:-0.55px;-webkit-text-stroke:0.35px #000">91,626</div><div class="t" style="left:350px;top:273px;width:79px;height:16px;text-align:right;font-size:12px;font-weight:bold;color:#000;line-height:16px;overflow:hidden;letter-spacing:-0.55px;-webkit-text-stroke:0.35px #000">99,453</div><div class="t" style="left:435px;top:273px;width:79px;height:16px;text-align:right;font-size:12px;font-weight:bold;color:#000;line-height:16px;overflow:hidden;letter-spacing:-0.55px;-webkit-text-stroke:0.35px #000">106,756</div><div class="t" style="left:520px;top:273px;width:79px;height:16px;text-align:right;font-size:12px;font-weight:bold;color:#000;line-height:16px;overflow:hidden;letter-spacing:-0.55px;-webkit-text-stroke:0.35px #000">114,111</div><div class="t" style="left:605px;top:273px;width:79px;height:16px;text-align:right;font-size:12px;font-weight:bold;color:#000;line-height:16px;overflow:hidden;letter-spacing:-0.55px;-webkit-text-stroke:0.35px #000">120,484</div><div class="t" style="left:690px;top:273px;width:79px;height:16px;text-align:right;font-size:12px;font-weight:bold;color:#000;line-height:16px;overflow:hidden;letter-spacing:-0.55px;-webkit-text-stroke:0.35px #000">128,155</div><div class="t" style="left:775px;top:273px;width:79px;height:16px;text-align:right;font-size:12px;font-weight:bold;color:#000;line-height:16px;overflow:hidden;letter-spacing:-0.55px;-webkit-text-stroke:0.35px #000">95,244</div><div class="t" style="left:860px;top:273px;width:79px;height:16px;text-align:right;font-size:12px;font-weight:bold;color:#000;line-height:16px;overflow:hidden;letter-spacing:-0.55px;-webkit-text-stroke:0.35px #000">102,000</div><div style="left:1px;top:290px;width:918px;height:16px;background:#C6C4C4;"></div><div style="left:1px;top:306px;width:918px;height:1px;background:#484848;"></div><div class="t" style="left:5px;top:290px;width:240px;height:16px;text-align:left;font-size:12px;font-weight:normal;color:#000;line-height:16px;overflow:hidden;">Regular Tax</div><div class="t" style="left:265px;top:290px;width:79px;height:16px;text-align:right;font-size:12px;font-weight:normal;color:#000;line-height:16px;overflow:hidden;letter-spacing:-0.55px">14,373</div><div class="t" style="left:350px;top:290px;width:79px;height:16px;text-align:right;font-size:12px;font-weight:normal;color:#000;line-height:16px;overflow:hidden;letter-spacing:-0.55px">16,323</div><div class="t" style="left:435px;top:290px;width:79px;height:16px;text-align:right;font-size:12px;font-weight:normal;color:#000;line-height:16px;overflow:hidden;letter-spacing:-0.55px">20,238</div><div class="t" style="left:520px;top:290px;width:79px;height:16px;text-align:right;font-size:12px;font-weight:normal;color:#000;line-height:16px;overflow:hidden;letter-spacing:-0.55px">24,823</div><div class="t" style="left:605px;top:290px;width:79px;height:16px;text-align:right;font-size:12px;font-weight:normal;color:#000;line-height:16px;overflow:hidden;letter-spacing:-0.55px">26,801</div><div class="t" style="left:690px;top:290px;width:79px;height:16px;text-align:right;font-size:12px;font-weight:normal;color:#000;line-height:16px;overflow:hidden;letter-spacing:-0.55px">32,779</div><div class="t" style="left:775px;top:290px;width:79px;height:16px;text-align:right;font-size:12px;font-weight:normal;color:#000;line-height:16px;overflow:hidden;letter-spacing:-0.55px">19,135</div><div class="t" style="left:860px;top:290px;width:79px;height:16px;text-align:right;font-size:12px;font-weight:normal;color:#000;line-height:16px;overflow:hidden;letter-spacing:-0.55px">21,000</div><div style="left:1px;top:307px;width:918px;height:16px;background:#fff;"></div><div style="left:1px;top:323px;width:918px;height:1px;background:#484848;"></div><div class="t" style="left:5px;top:307px;width:240px;height:16px;text-align:left;font-size:12px;font-weight:normal;color:#000;line-height:16px;overflow:hidden;">"Kiddie" Tax</div><svg style="left:249px;top:312px" width="10" height="10" shape-rendering="crispEdges"><rect x="0.5" y="0.5" width="9" height="9" fill="none" stroke="#202070"/></svg><div style="left:1px;top:324px;width:918px;height:16px;background:#fff;"></div><div style="left:1px;top:340px;width:918px;height:1px;background:#484848;"></div><div class="t" style="left:5px;top:324px;width:240px;height:16px;text-align:left;font-size:12px;font-weight:normal;color:#000;line-height:16px;overflow:hidden;">Nonrefundable Credits</div><svg style="left:248px;top:329px" width="11" height="10" viewBox="0 0 11 10" shape-rendering="crispEdges"><path d="M2.5 0.5 H10.5 V9.5 H2.5 Z" fill="none" stroke="#202070" stroke-width="1"/><rect x="0" y="4" width="6" height="2" fill="#202070"/><path d="M4 2 L8 5 L4 8 Z" fill="#202070"/></svg><div style="left:1px;top:341px;width:918px;height:16px;background:#fff;"></div><div style="left:1px;top:357px;width:918px;height:1px;background:#484848;"></div><div class="t" style="left:5px;top:341px;width:240px;height:16px;text-align:left;font-size:12px;font-weight:normal;color:#000;line-height:16px;overflow:hidden;">Self-Employment Tax</div><div class="t" style="left:265px;top:341px;width:79px;height:16px;text-align:right;font-size:12px;font-weight:normal;color:#000;line-height:16px;overflow:hidden;letter-spacing:-0.55px">2,086</div><div class="t" style="left:350px;top:341px;width:79px;height:16px;text-align:right;font-size:12px;font-weight:normal;color:#000;line-height:16px;overflow:hidden;letter-spacing:-0.55px">2,086</div><div class="t" style="left:435px;top:341px;width:79px;height:16px;text-align:right;font-size:12px;font-weight:normal;color:#000;line-height:16px;overflow:hidden;letter-spacing:-0.55px">2,421</div><div class="t" style="left:520px;top:341px;width:79px;height:16px;text-align:right;font-size:12px;font-weight:normal;color:#000;line-height:16px;overflow:hidden;letter-spacing:-0.55px">499</div><div class="t" style="left:605px;top:341px;width:79px;height:16px;text-align:right;font-size:12px;font-weight:normal;color:#000;line-height:16px;overflow:hidden;letter-spacing:-0.55px">499</div><div class="t" style="left:690px;top:341px;width:79px;height:16px;text-align:right;font-size:12px;font-weight:normal;color:#000;line-height:16px;overflow:hidden;letter-spacing:-0.55px">834</div><div class="t" style="left:775px;top:341px;width:79px;height:16px;text-align:right;font-size:12px;font-weight:normal;color:#000;line-height:16px;overflow:hidden;letter-spacing:-0.55px">499</div><div style="left:1px;top:358px;width:918px;height:16px;background:#fff;"></div><div style="left:1px;top:374px;width:918px;height:1px;background:#484848;"></div><div class="t" style="left:5px;top:358px;width:240px;height:16px;text-align:left;font-size:12px;font-weight:normal;color:#000;line-height:16px;overflow:hidden;">Minimum Tax</div><svg style="left:248px;top:363px" width="11" height="10" viewBox="0 0 11 10" shape-rendering="crispEdges"><path d="M2.5 0.5 H10.5 V9.5 H2.5 Z" fill="none" stroke="#202070" stroke-width="1"/><rect x="0" y="4" width="6" height="2" fill="#202070"/><path d="M4 2 L8 5 L4 8 Z" fill="#202070"/></svg><div class="t" style="left:350px;top:358px;width:79px;height:16px;text-align:right;font-size:12px;font-weight:normal;color:#000;line-height:16px;overflow:hidden;letter-spacing:-0.55px">3,693</div><div class="t" style="left:435px;top:358px;width:79px;height:16px;text-align:right;font-size:12px;font-weight:normal;color:#000;line-height:16px;overflow:hidden;letter-spacing:-0.55px">1,907</div><div class="t" style="left:520px;top:358px;width:79px;height:16px;text-align:right;font-size:12px;font-weight:normal;color:#000;line-height:16px;overflow:hidden;letter-spacing:-0.55px">3,797</div><div class="t" style="left:605px;top:358px;width:79px;height:16px;text-align:right;font-size:12px;font-weight:normal;color:#000;line-height:16px;overflow:hidden;letter-spacing:-0.55px">8,353</div><div class="t" style="left:690px;top:358px;width:79px;height:16px;text-align:right;font-size:12px;font-weight:normal;color:#000;line-height:16px;overflow:hidden;letter-spacing:-0.55px">5,253</div><div class="t" style="left:860px;top:358px;width:79px;height:16px;text-align:right;font-size:12px;font-weight:normal;color:#000;line-height:16px;overflow:hidden;letter-spacing:-0.55px">2,000</div><div style="left:1px;top:375px;width:918px;height:16px;background:#fff;"></div><div style="left:1px;top:391px;width:918px;height:1px;background:#484848;"></div><div class="t" style="left:5px;top:375px;width:240px;height:16px;text-align:left;font-size:12px;font-weight:normal;color:#000;line-height:16px;overflow:hidden;">Other Taxes</div><svg style="left:248px;top:380px" width="11" height="10" viewBox="0 0 11 10" shape-rendering="crispEdges"><path d="M2.5 0.5 H10.5 V9.5 H2.5 Z" fill="none" stroke="#202070" stroke-width="1"/><rect x="0" y="4" width="6" height="2" fill="#202070"/><path d="M4 2 L8 5 L4 8 Z" fill="#202070"/></svg><div class="t" style="left:265px;top:375px;width:79px;height:16px;text-align:right;font-size:12px;font-weight:normal;color:#000;line-height:16px;overflow:hidden;letter-spacing:-0.55px">1,530</div><div class="t" style="left:350px;top:375px;width:79px;height:16px;text-align:right;font-size:12px;font-weight:normal;color:#000;line-height:16px;overflow:hidden;letter-spacing:-0.55px">1,530</div><div class="t" style="left:435px;top:375px;width:79px;height:16px;text-align:right;font-size:12px;font-weight:normal;color:#000;line-height:16px;overflow:hidden;letter-spacing:-0.55px">1,530</div><div class="t" style="left:520px;top:375px;width:79px;height:16px;text-align:right;font-size:12px;font-weight:normal;color:#000;line-height:16px;overflow:hidden;letter-spacing:-0.55px">1,530</div><div class="t" style="left:605px;top:375px;width:79px;height:16px;text-align:right;font-size:12px;font-weight:normal;color:#000;line-height:16px;overflow:hidden;letter-spacing:-0.55px">1,530</div><div class="t" style="left:690px;top:375px;width:79px;height:16px;text-align:right;font-size:12px;font-weight:normal;color:#000;line-height:16px;overflow:hidden;letter-spacing:-0.55px">1,530</div><div class="t" style="left:775px;top:375px;width:79px;height:16px;text-align:right;font-size:12px;font-weight:normal;color:#000;line-height:16px;overflow:hidden;letter-spacing:-0.55px">1,530</div><div class="t" style="left:860px;top:375px;width:79px;height:16px;text-align:right;font-size:12px;font-weight:normal;color:#000;line-height:16px;overflow:hidden;letter-spacing:-0.55px">1,530</div><div style="left:244px;top:52px;width:1px;height:338px;background:#484848;"></div><div style="left:349px;top:52px;width:1px;height:338px;background:#484848;"></div><div style="left:434px;top:52px;width:1px;height:338px;background:#484848;"></div><div style="left:519px;top:52px;width:1px;height:338px;background:#484848;"></div><div style="left:604px;top:52px;width:1px;height:338px;background:#484848;"></div><div style="left:689px;top:52px;width:1px;height:338px;background:#484848;"></div><div style="left:774px;top:52px;width:1px;height:338px;background:#484848;"></div><div style="left:859px;top:52px;width:1px;height:338px;background:#484848;"></div><div style="left:264px;top:1px;width:1px;height:389px;background:#000;"></div><div style="left:246px;top:52px;width:18px;height:16px;background:transparent;box-sizing:border-box;border:1px dotted #000"></div>
</div>
<div style="left:931px;top:99px;width:16px;height:390px;background:repeating-conic-gradient(#fff 0 25%,#D4D0C8 0 50%) 0 0/2px 2px;"></div>
<div style="left:931px;top:99px;width:16px;height:16px;background:#D4D0C8;"></div>
<div style="left:931px;top:99px;width:15px;height:1px;background:#D4D0C8;"></div>
<div style="left:931px;top:99px;width:1px;height:15px;background:#D4D0C8;"></div>
<div style="left:932px;top:100px;width:13px;height:1px;background:#FFFFFF;"></div>
<div style="left:932px;top:100px;width:1px;height:13px;background:#FFFFFF;"></div>
<div style="left:945px;top:100px;width:1px;height:14px;background:#808080;"></div>
<div style="left:932px;top:113px;width:14px;height:1px;background:#808080;"></div>
<div style="left:946px;top:99px;width:1px;height:16px;background:#404040;"></div>
<div style="left:931px;top:114px;width:16px;height:1px;background:#404040;"></div>
<svg style="position:absolute;left:931px;top:99px" width="16" height="16"><path d="M4 10 H11 L7.5 6.5 Z" fill="#000"/></svg>
<div style="left:931px;top:115px;width:16px;height:220px;background:#D4D0C8;"></div>
<div style="left:931px;top:115px;width:15px;height:1px;background:#D4D0C8;"></div>
<div style="left:931px;top:115px;width:1px;height:219px;background:#D4D0C8;"></div>
<div style="left:932px;top:116px;width:13px;height:1px;background:#FFFFFF;"></div>
<div style="left:932px;top:116px;width:1px;height:217px;background:#FFFFFF;"></div>
<div style="left:945px;top:116px;width:1px;height:218px;background:#808080;"></div>
<div style="left:932px;top:333px;width:14px;height:1px;background:#808080;"></div>
<div style="left:946px;top:115px;width:1px;height:220px;background:#404040;"></div>
<div style="left:931px;top:334px;width:16px;height:1px;background:#404040;"></div>
<div style="left:931px;top:473px;width:16px;height:16px;background:#D4D0C8;"></div>
<div style="left:931px;top:473px;width:15px;height:1px;background:#D4D0C8;"></div>
<div style="left:931px;top:473px;width:1px;height:15px;background:#D4D0C8;"></div>
<div style="left:932px;top:474px;width:13px;height:1px;background:#FFFFFF;"></div>
<div style="left:932px;top:474px;width:1px;height:13px;background:#FFFFFF;"></div>
<div style="left:945px;top:474px;width:1px;height:14px;background:#808080;"></div>
<div style="left:932px;top:487px;width:14px;height:1px;background:#808080;"></div>
<div style="left:946px;top:473px;width:1px;height:16px;background:#404040;"></div>
<div style="left:931px;top:488px;width:16px;height:1px;background:#404040;"></div>
<svg style="position:absolute;left:931px;top:473px" width="16" height="16"><path d="M4 6 H11 L7.5 9.5 Z" fill="#000"/></svg>
<div style="left:12px;top:489px;width:919px;height:16px;background:repeating-conic-gradient(#fff 0 25%,#D4D0C8 0 50%) 0 0/2px 2px;"></div>
<div style="left:12px;top:489px;width:16px;height:16px;background:#D4D0C8;"></div>
<div style="left:12px;top:489px;width:15px;height:1px;background:#D4D0C8;"></div>
<div style="left:12px;top:489px;width:1px;height:15px;background:#D4D0C8;"></div>
<div style="left:13px;top:490px;width:13px;height:1px;background:#FFFFFF;"></div>
<div style="left:13px;top:490px;width:1px;height:13px;background:#FFFFFF;"></div>
<div style="left:26px;top:490px;width:1px;height:14px;background:#808080;"></div>
<div style="left:13px;top:503px;width:14px;height:1px;background:#808080;"></div>
<div style="left:27px;top:489px;width:1px;height:16px;background:#404040;"></div>
<div style="left:12px;top:504px;width:16px;height:1px;background:#404040;"></div>
<svg style="position:absolute;left:12px;top:489px" width="16" height="16"><path d="M9 4 V11 L5.5 7.5 Z" fill="#000"/></svg>
<div style="left:28px;top:489px;width:710px;height:16px;background:#D4D0C8;"></div>
<div style="left:28px;top:489px;width:709px;height:1px;background:#D4D0C8;"></div>
<div style="left:28px;top:489px;width:1px;height:15px;background:#D4D0C8;"></div>
<div style="left:29px;top:490px;width:707px;height:1px;background:#FFFFFF;"></div>
<div style="left:29px;top:490px;width:1px;height:13px;background:#FFFFFF;"></div>
<div style="left:736px;top:490px;width:1px;height:14px;background:#808080;"></div>
<div style="left:29px;top:503px;width:708px;height:1px;background:#808080;"></div>
<div style="left:737px;top:489px;width:1px;height:16px;background:#404040;"></div>
<div style="left:28px;top:504px;width:710px;height:1px;background:#404040;"></div>
<div style="left:915px;top:489px;width:16px;height:16px;background:#D4D0C8;"></div>
<div style="left:915px;top:489px;width:15px;height:1px;background:#D4D0C8;"></div>
<div style="left:915px;top:489px;width:1px;height:15px;background:#D4D0C8;"></div>
<div style="left:916px;top:490px;width:13px;height:1px;background:#FFFFFF;"></div>
<div style="left:916px;top:490px;width:1px;height:13px;background:#FFFFFF;"></div>
<div style="left:929px;top:490px;width:1px;height:14px;background:#808080;"></div>
<div style="left:916px;top:503px;width:14px;height:1px;background:#808080;"></div>
<div style="left:930px;top:489px;width:1px;height:16px;background:#404040;"></div>
<div style="left:915px;top:504px;width:16px;height:1px;background:#404040;"></div>
<svg style="position:absolute;left:915px;top:489px" width="16" height="16"><path d="M6 4 V11 L9.5 7.5 Z" fill="#000"/></svg>
<div style="left:931px;top:489px;width:16px;height:16px;background:#D4D0C8;"></div>
<div class="t" style="left:5px;top:541px;font-size:11px;font-weight:normal;color:#000;line-height:16px;letter-spacing:-0.2px">Ready</div>
<div style="left:773px;top:541px;width:37px;height:16px;background:transparent;box-sizing:border-box;border-top:1px solid #808080;border-left:1px solid #808080;border-bottom:1px solid #FFFFFF;border-right:1px solid #FFFFFF"></div>
<div style="left:811px;top:541px;width:36px;height:16px;background:transparent;box-sizing:border-box;border-top:1px solid #808080;border-left:1px solid #808080;border-bottom:1px solid #FFFFFF;border-right:1px solid #FFFFFF"></div>
<div style="left:849px;top:541px;width:26px;height:16px;background:transparent;box-sizing:border-box;border-top:1px solid #808080;border-left:1px solid #808080;border-bottom:1px solid #FFFFFF;border-right:1px solid #FFFFFF"></div>
<div style="left:877px;top:541px;width:28px;height:16px;background:transparent;box-sizing:border-box;border-top:1px solid #808080;border-left:1px solid #808080;border-bottom:1px solid #FFFFFF;border-right:1px solid #FFFFFF"></div>
<div style="left:907px;top:541px;width:31px;height:16px;background:transparent;box-sizing:border-box;border-top:1px solid #808080;border-left:1px solid #808080;border-bottom:1px solid #FFFFFF;border-right:1px solid #FFFFFF"></div>
<div class="t" style="left:878px;top:541px;font-size:11px;font-weight:normal;color:#000;line-height:16px;letter-spacing:-1px">NUM</div>
<svg style="position:absolute;left:942px;top:544px" width="13" height="13" shape-rendering="crispEdges"><path d="M12 1 L1 12 M12 5 L5 12 M12 9 L9 12" stroke="#808080" stroke-width="1.5"/><path d="M12 2 L2 12 M12 6 L6 12 M12 10 L10 12" stroke="#fff" stroke-width="1"/></svg>
</div></body></html>
